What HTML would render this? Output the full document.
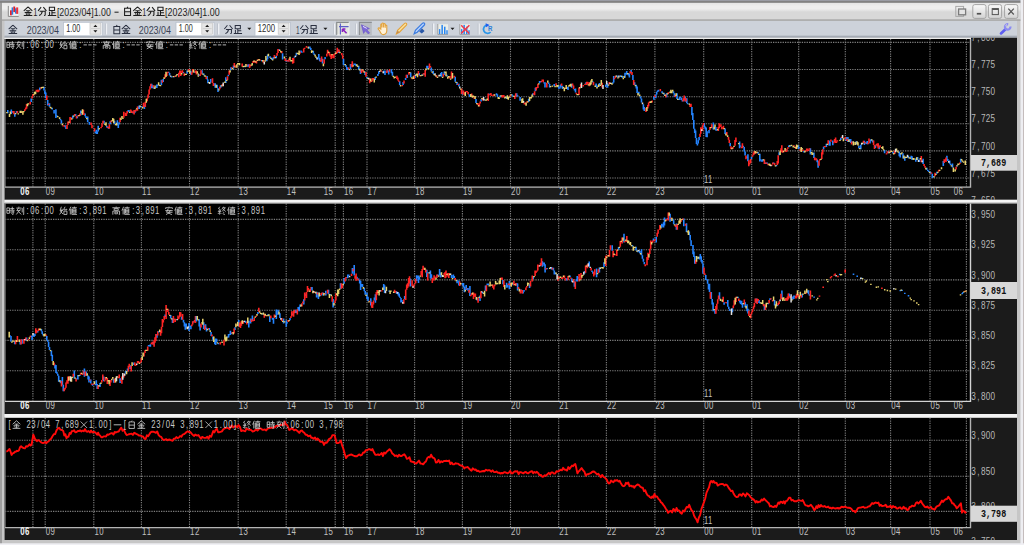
<!DOCTYPE html><html><head><meta charset="utf-8"><title>chart</title><style>html,body{margin:0;padding:0;width:1024px;height:545px;overflow:hidden;background:#c6c6c6}svg{display:block}text{font-family:"Liberation Mono",monospace}</style></head><body>
<svg width="1024" height="545" viewBox="0 0 1024 545">
<defs>
<linearGradient id="tb" x1="0" y1="0" x2="0" y2="1"><stop offset="0" stop-color="#e4e4e4"/><stop offset="0.2" stop-color="#eeeeee"/><stop offset="0.36" stop-color="#eeeeee"/><stop offset="0.55" stop-color="#d8d8d8"/><stop offset="1" stop-color="#d8d8d8"/></linearGradient>
<linearGradient id="btn" x1="0" y1="0" x2="0" y2="1"><stop offset="0" stop-color="#fafafa"/><stop offset="1" stop-color="#d2d2d2"/></linearGradient>
<clipPath id="c1"><rect x="5" y="38" width="965.5" height="149"/></clipPath>
<clipPath id="c2"><rect x="5" y="203.5" width="965.5" height="198"/></clipPath>
<clipPath id="c3"><rect x="5" y="418" width="965.5" height="110"/></clipPath>
<clipPath id="a1"><rect x="971" y="37.8" width="46" height="162"/></clipPath>
<clipPath id="a2"><rect x="971" y="203.5" width="46" height="210.5"/></clipPath>
<clipPath id="a3"><rect x="971" y="418" width="46" height="122"/></clipPath>
</defs>
<rect x="0" y="0" width="1024" height="545" fill="#c6c6c6"/>
<rect x="0" y="0" width="2" height="545" fill="#9e9e9e"/>
<rect x="0" y="0" width="1024" height="1" fill="#9a9ca4"/><rect x="0" y="1" width="1021" height="1.9" fill="#828282"/>
<rect x="1020.5" y="0" width="2.5" height="545" fill="#eeeef2"/>
<rect x="1023" y="0" width="1" height="545" fill="#c4bcbc"/>
<rect x="0" y="543.3" width="1024" height="2" fill="#f0f0f4"/>
<rect x="2" y="2.9" width="1018.5" height="16.5" fill="url(#tb)"/><rect x="2" y="19.4" width="1018.5" height="1.5" fill="#a8a8a8"/>
<rect x="4.5" y="20.9" width="1012.5" height="15" fill="#cdd2da"/>
<rect x="4.5" y="35.7" width="1012.5" height="2.1" fill="#a4aab4"/><rect x="4.5" y="37.8" width="966.5" height="1.2" fill="#ececec"/><rect x="971" y="37.8" width="46" height="1.2" fill="#1b1b1b"/>
<rect x="8.8" y="6.2" width="9.6" height="9.8" fill="#f2f2f2"/>
<path d="M8.3 5.9V16.4H18.7" stroke="#8a8a8a" stroke-width="1" fill="none"/>
<rect x="10" y="10.3" width="1.9" height="5" fill="#e8202a"/><rect x="11.6" y="7.4" width="1.6" height="7.3" fill="#2a7ae0"/><rect x="13.3" y="6.5" width="1.9" height="5.6" fill="#d81e2a"/><rect x="15" y="8.3" width="1.6" height="5.3" fill="#2a7ae0"/><rect x="16.2" y="7.4" width="2" height="6.5" fill="#f0303a"/>
<path transform="translate(23.40 6.60) scale(0.930)" d="M5 0.4L0.4 4.6M5 0.4L9.6 4.6M2.6 4.4H7.4M1.4 6.4H8.6M5 4.4V9.4M2.8 7.2L3.6 8.8M7.2 7.2L6.4 8.8M0.4 9.5H9.6" stroke="#1e1e1e" stroke-width="1.13" fill="none"/>
<text x="33.20" y="16.00" textLength="4.20" lengthAdjust="spacingAndGlyphs" font-size="10.2" font-weight="normal" fill="#1e1e1e" style="font-family:'Liberation Sans',sans-serif" xml:space="preserve">1</text>
<path transform="translate(37.60 6.60) scale(0.930)" d="M3.8 0.5L0.5 4.6M6.2 0.5L9.5 4.6M2.2 5H8.2V8.6Q8.2 9.6 7 9.5M5 5Q4.8 8.2 1.6 9.6" stroke="#1e1e1e" stroke-width="1.13" fill="none"/>
<path transform="translate(47.30 6.60) scale(0.930)" d="M2.2 0.8H7.8V4.2H2.2ZM5 4.2V9.2M5 6.6H8.8M2.4 5.6V9.3M0.6 9.5H9.6" stroke="#1e1e1e" stroke-width="1.13" fill="none"/>
<text x="56.90" y="16.00" textLength="53.90" lengthAdjust="spacingAndGlyphs" font-size="10.2" font-weight="normal" fill="#1e1e1e" style="font-family:'Liberation Sans',sans-serif" xml:space="preserve">[2023/04]1.00</text>
<path d="M114.5 12.2H118.6" stroke="#1e1e1e" stroke-width="1"/>
<path transform="translate(122.90 6.60) scale(0.930)" d="M5.4 0.2L4.4 1.6M1.8 1.8H8.2V9.6H1.8ZM1.8 5.6H8.2" stroke="#1e1e1e" stroke-width="1.13" fill="none"/>
<path transform="translate(132.90 6.60) scale(0.930)" d="M5 0.4L0.4 4.6M5 0.4L9.6 4.6M2.6 4.4H7.4M1.4 6.4H8.6M5 4.4V9.4M2.8 7.2L3.6 8.8M7.2 7.2L6.4 8.8M0.4 9.5H9.6" stroke="#1e1e1e" stroke-width="1.13" fill="none"/>
<text x="142.30" y="16.00" textLength="4.00" lengthAdjust="spacingAndGlyphs" font-size="10.2" font-weight="normal" fill="#1e1e1e" style="font-family:'Liberation Sans',sans-serif" xml:space="preserve">1</text>
<path transform="translate(146.30 6.60) scale(0.930)" d="M3.8 0.5L0.5 4.6M6.2 0.5L9.5 4.6M2.2 5H8.2V8.6Q8.2 9.6 7 9.5M5 5Q4.8 8.2 1.6 9.6" stroke="#1e1e1e" stroke-width="1.13" fill="none"/>
<path transform="translate(155.80 6.60) scale(0.930)" d="M2.2 0.8H7.8V4.2H2.2ZM5 4.2V9.2M5 6.6H8.8M2.4 5.6V9.3M0.6 9.5H9.6" stroke="#1e1e1e" stroke-width="1.13" fill="none"/>
<text x="165.10" y="16.00" textLength="54.50" lengthAdjust="spacingAndGlyphs" font-size="10.2" font-weight="normal" fill="#1e1e1e" style="font-family:'Liberation Sans',sans-serif" xml:space="preserve">[2023/04]1.00</text>
<rect x="955.8" y="6.4" width="7.8" height="10" fill="none" stroke="#a8a8a8" stroke-width="1"/>
<rect x="958.6" y="9" width="7" height="5.8" fill="#e4e4e4" stroke="#7a7a7a" stroke-width="1.3"/>
<rect x="972.8" y="4.6" width="13.2" height="13.8" rx="2" fill="url(#btn)" stroke="#a4a4a4" stroke-width="1"/>
<rect x="988.4" y="4.6" width="13.2" height="13.8" rx="2" fill="url(#btn)" stroke="#a4a4a4" stroke-width="1"/>
<rect x="1004.6" y="4.6" width="13.2" height="13.8" rx="2" fill="url(#btn)" stroke="#a4a4a4" stroke-width="1"/>
<rect x="976.8" y="12.9" width="4.4" height="1.7" fill="#505050"/>
<rect x="992.2" y="8.6" width="6.2" height="6" fill="none" stroke="#555" stroke-width="1"/><rect x="992.2" y="8.4" width="6.2" height="1.6" fill="#555"/>
<path d="M1008.3 8.7L1013.8 14.5M1013.8 8.7L1008.3 14.5" stroke="#555" stroke-width="1.2"/>
<path transform="translate(8.30 24.80) scale(0.920)" d="M5 0.4L0.4 4.6M5 0.4L9.6 4.6M2.6 4.4H7.4M1.4 6.4H8.6M5 4.4V9.4M2.8 7.2L3.6 8.8M7.2 7.2L6.4 8.8M0.4 9.5H9.6" stroke="#2a3040" stroke-width="1.09" fill="none"/>
<text x="26.70" y="34.10" textLength="32.30" lengthAdjust="spacingAndGlyphs" font-size="10.8" font-weight="normal" fill="#3a4254" style="font-family:'Liberation Sans',sans-serif" xml:space="preserve">2023/04</text>
<rect x="63.4" y="22.3" width="38.800000000000004" height="13.5" fill="#ffffff" stroke="#b8c0cc" stroke-width="0.8"/>
<text x="66.20" y="32.00" textLength="14.00" lengthAdjust="spacingAndGlyphs" font-size="10.5" font-weight="normal" fill="#2c2c2c" style="font-family:'Liberation Sans',sans-serif" xml:space="preserve">1.00</text>
<rect x="90.0" y="23" width="10.8" height="11.2" fill="#e6e6e6" stroke="#c4c4c4" stroke-width="0.7"/>
<path d="M91.0 28.6H99.8" stroke="#c8c8c8" stroke-width="0.8"/>
<path d="M93.4 27H97.4L95.4 24.8Z M93.4 30.3H97.4L95.4 32.6Z" fill="#1a1a1a"/>
<rect x="105.7" y="23.5" width="1.4" height="11" fill="#eef0f4"/><rect x="105.1" y="23.5" width="0.6" height="11" fill="#b4bac4"/>
<path transform="translate(112.20 24.80) scale(0.920)" d="M5.4 0.2L4.4 1.6M1.8 1.8H8.2V9.6H1.8ZM1.8 5.6H8.2" stroke="#2a3040" stroke-width="1.09" fill="none"/>
<path transform="translate(121.40 24.80) scale(0.920)" d="M5 0.4L0.4 4.6M5 0.4L9.6 4.6M2.6 4.4H7.4M1.4 6.4H8.6M5 4.4V9.4M2.8 7.2L3.6 8.8M7.2 7.2L6.4 8.8M0.4 9.5H9.6" stroke="#2a3040" stroke-width="1.09" fill="none"/>
<text x="138.70" y="34.10" textLength="32.30" lengthAdjust="spacingAndGlyphs" font-size="10.8" font-weight="normal" fill="#3a4254" style="font-family:'Liberation Sans',sans-serif" xml:space="preserve">2023/04</text>
<rect x="176" y="22.3" width="38" height="13.5" fill="#ffffff" stroke="#b8c0cc" stroke-width="0.8"/>
<text x="178.80" y="32.00" textLength="14.00" lengthAdjust="spacingAndGlyphs" font-size="10.5" font-weight="normal" fill="#2c2c2c" style="font-family:'Liberation Sans',sans-serif" xml:space="preserve">1.00</text>
<rect x="201.8" y="23" width="10.8" height="11.2" fill="#e6e6e6" stroke="#c4c4c4" stroke-width="0.7"/>
<path d="M202.8 28.6H211.60000000000002" stroke="#c8c8c8" stroke-width="0.8"/>
<path d="M205.20000000000002 27H209.20000000000002L207.20000000000002 24.8Z M205.20000000000002 30.3H209.20000000000002L207.20000000000002 32.6Z" fill="#1a1a1a"/>
<rect x="218.0" y="23.5" width="1.4" height="11" fill="#eef0f4"/><rect x="217.4" y="23.5" width="0.6" height="11" fill="#b4bac4"/>
<path transform="translate(223.90 24.80) scale(0.920)" d="M3.8 0.5L0.5 4.6M6.2 0.5L9.5 4.6M2.2 5H8.2V8.6Q8.2 9.6 7 9.5M5 5Q4.8 8.2 1.6 9.6" stroke="#2a3040" stroke-width="1.09" fill="none"/>
<path transform="translate(233.20 24.80) scale(0.920)" d="M2.2 0.8H7.8V4.2H2.2ZM5 4.2V9.2M5 6.6H8.8M2.4 5.6V9.3M0.6 9.5H9.6" stroke="#2a3040" stroke-width="1.09" fill="none"/>
<path d="M247.3 27.8H251.3L249.3 30Z" fill="#1a1a1a"/>
<rect x="255" y="22.3" width="35.39999999999998" height="13.5" fill="#ffffff" stroke="#b8c0cc" stroke-width="0.8"/>
<text x="257.80" y="32.00" textLength="17.20" lengthAdjust="spacingAndGlyphs" font-size="10.5" font-weight="normal" fill="#2c2c2c" style="font-family:'Liberation Sans',sans-serif" xml:space="preserve">1200</text>
<rect x="278.2" y="23" width="10.8" height="11.2" fill="#e6e6e6" stroke="#c4c4c4" stroke-width="0.7"/>
<path d="M279.2 28.6H288.0" stroke="#c8c8c8" stroke-width="0.8"/>
<path d="M281.59999999999997 27H285.59999999999997L283.59999999999997 24.8Z M281.59999999999997 30.3H285.59999999999997L283.59999999999997 32.6Z" fill="#1a1a1a"/>
<text x="296.00" y="34.10" textLength="3.60" lengthAdjust="spacingAndGlyphs" font-size="10.8" font-weight="normal" fill="#3a4254" style="font-family:'Liberation Sans',sans-serif" xml:space="preserve">1</text>
<path transform="translate(299.80 24.80) scale(0.920)" d="M3.8 0.5L0.5 4.6M6.2 0.5L9.5 4.6M2.2 5H8.2V8.6Q8.2 9.6 7 9.5M5 5Q4.8 8.2 1.6 9.6" stroke="#2a3040" stroke-width="1.09" fill="none"/>
<path transform="translate(309.00 24.80) scale(0.920)" d="M2.2 0.8H7.8V4.2H2.2ZM5 4.2V9.2M5 6.6H8.8M2.4 5.6V9.3M0.6 9.5H9.6" stroke="#2a3040" stroke-width="1.09" fill="none"/>
<path d="M323.4 27.8H327.4L325.4 30Z" fill="#1a1a1a"/>
<rect x="333.7" y="23.5" width="1.4" height="11" fill="#eef0f4"/><rect x="333.1" y="23.5" width="0.6" height="11" fill="#b4bac4"/>
<rect x="336.2" y="21.9" width="12.9" height="13.2" fill="#e4e6e0"/><path d="M336.7 35V22.4H349" stroke="#8a8e90" stroke-width="1.2" fill="none"/><path d="M349 22.4V35H336.7" stroke="#f4f6f8" stroke-width="0.8" fill="none"/>
<path d="M340.4 23.5V34.5M339 26.6H348.6" stroke="#5a5ec8" stroke-width="1.1"/><path d="M346.6 33.2L343 29.6M342.4 29V32M342.4 29H345.4" stroke="#8a22c0" stroke-width="1.5" fill="none"/>
<rect x="355.7" y="23.5" width="1.4" height="11" fill="#eef0f4"/><rect x="355.1" y="23.5" width="0.6" height="11" fill="#b4bac4"/>
<rect x="358.9" y="21.9" width="12.9" height="13.2" fill="#b8bcc2"/><path d="M359.4 35V22.4H371.8" stroke="#8c9094" stroke-width="1.1" fill="none"/>
<path d="M361.4 24.8L369.4 28.6L366.6 29.6L369.6 32.8L368.4 34L365.3 30.8L363.6 33.4Z" fill="#7c68d8" stroke="#6a50c8" stroke-width="0.6"/><path d="M363 26.4L366.8 28.4" stroke="#e8e4ff" stroke-width="1"/>
<path d="M379.6 30.6Q377.4 28.8 378.4 28Q379.4 27.6 380.8 29V24.8Q381 23.6 382 24V27.4V23.6Q382.6 22.6 383.6 23.4V27.4V24Q384.4 23.2 385.2 24.2V27.8V25.4Q386 24.8 386.8 25.6V31Q386.4 34.4 383.4 34.6Q381 34.6 379.6 30.6Z" fill="#fff2d8" stroke="#e2a23c" stroke-width="1.1"/>
<path d="M396.4 33.8L397.6 30.4L404.6 23.4Q405.6 22.6 406.4 23.4Q407.2 24.2 406.4 25.2L399.4 32.2Z" fill="#f8e2a0" stroke="#e4a23a" stroke-width="1.1"/><path d="M396.4 33.8L397.6 30.4L399.4 32.2Z" fill="#c08850"/>
<path d="M414.2 33.8L415.4 30.4L422.6 23.2Q423.6 22.4 424.4 23.2Q425.2 24 424.4 25L417.2 32.2Z" fill="#b8d4ff" stroke="#3c7ce0" stroke-width="1.2"/><path d="M419.2 31.4L422 28.6L424.6 31L421.8 33.6Z" fill="#2a58a8"/>
<rect x="433.0" y="23.5" width="1.4" height="11" fill="#eef0f4"/><rect x="432.40000000000003" y="23.5" width="0.6" height="11" fill="#b4bac4"/>
<rect x="437.8" y="24.2" width="10.2" height="10" fill="#eceee8"/><path d="M437.8 24V34.4H448.0" stroke="#9a9a9a" stroke-width="0.9" fill="none"/>
<rect x="438.9" y="29.1" width="1.4" height="5" fill="#2a86f0"/><rect x="441.4" y="24.9" width="1.5" height="9.2" fill="#2a86f0"/><rect x="444.0" y="26.7" width="1.5" height="7.4" fill="#2a86f0"/><rect x="446.3" y="30.2" width="1.4" height="3.9" fill="#2a86f0"/>
<path d="M450.5 27.8H454.5L452.5 30Z" fill="#1a1a1a"/>
<rect x="459.8" y="24.2" width="10.2" height="10" fill="#eceee8"/><path d="M459.8 24V34.4H470.0" stroke="#9a9a9a" stroke-width="0.9" fill="none"/>
<rect x="460.9" y="29.1" width="1.4" height="5" fill="#2a86f0"/><rect x="463.4" y="24.9" width="1.5" height="9.2" fill="#2a86f0"/><rect x="466.0" y="26.7" width="1.5" height="7.4" fill="#2a86f0"/><rect x="468.3" y="30.2" width="1.4" height="3.9" fill="#2a86f0"/>
<path d="M461.2 25.2L469.2 33.4M469.4 25.2L461.2 33.4" stroke="#f03a4a" stroke-width="1.5"/>
<rect x="478.4" y="23.5" width="1.4" height="11" fill="#eef0f4"/><rect x="477.8" y="23.5" width="0.6" height="11" fill="#b4bac4"/>
<path d="M487.6 25.1A4.1 4.1 0 1 0 490.6 32" stroke="#2a96e8" stroke-width="1.7" fill="none"/><path d="M485.6 23.2L489.6 24.9L486 27.2Z" fill="#1a5cf0"/>
<text x="488.00" y="30.90" textLength="4.40" lengthAdjust="spacingAndGlyphs" font-size="8" font-weight="bold" fill="#2a7ed8" style="font-family:'Liberation Sans',sans-serif" xml:space="preserve">R</text>
<path d="M1001 33.4L1005.2 29.4" stroke="#5e5ef2" stroke-width="2.7" stroke-linecap="round"/><path d="M1010.3 26.4A2.7 2.7 0 1 1 1008.2 24.3" stroke="#8c8cf2" stroke-width="2.3" fill="none"/><path d="M1005.6 26.2A2 2 0 0 1 1007 24.6" stroke="#e4e4ff" stroke-width="1"/>
<rect x="4.6" y="39" width="1012.4" height="160.8" fill="#1b1b1b"/>
<rect x="5" y="39" width="965.5" height="147.5" fill="#000"/>
<path d="M5 42.4H970 M5 69.5H970 M5 96.7H970 M5 123.7H970 M5 150.9H970 M5 178.0H970 M32.9 39V186.5 M45.2 39V186.5 M93.8 39V186.5 M141.4 39V186.5 M189.5 39V186.5 M238.2 39V186.5 M286.2 39V186.5 M335.2 39V186.5 M343.4 39V186.5 M367 39V186.5 M414.6 39V186.5 M462.4 39V186.5 M510.5 39V186.5 M558.7 39V186.5 M606.4 39V186.5 M654.9 39V186.5 M703.7 39V186.5 M751.7 39V186.5 M798.7 39V186.5 M845.3 39V186.5 M890.6 39V186.5 M930 39V186.5 M966.4 39V186.5" stroke="#7c7c7c" stroke-width="1.1" stroke-dasharray="1.3 1.1" fill="none"/>
<path d="M5.4 39V187.1" stroke="#686868" stroke-width="0.9" fill="none"/><path d="M5 187.1H970.5V39" stroke="#b4b4b4" stroke-width="1.4" fill="none"/>
<rect x="4.6" y="203" width="1012.4" height="211" fill="#1b1b1b"/>
<rect x="5" y="203.5" width="965.5" height="197.3" fill="#000"/>
<path d="M5 219.4H970 M5 249.7H970 M5 279.9H970 M5 310.2H970 M5 340.4H970 M5 370.7H970 M32.9 203.5V400.8 M45.2 203.5V400.8 M93.8 203.5V400.8 M141.4 203.5V400.8 M189.5 203.5V400.8 M238.2 203.5V400.8 M286.2 203.5V400.8 M335.2 203.5V400.8 M343.4 203.5V400.8 M367 203.5V400.8 M414.6 203.5V400.8 M462.4 203.5V400.8 M510.5 203.5V400.8 M558.7 203.5V400.8 M606.4 203.5V400.8 M654.9 203.5V400.8 M703.7 203.5V400.8 M751.7 203.5V400.8 M798.7 203.5V400.8 M845.3 203.5V400.8 M890.6 203.5V400.8 M930 203.5V400.8 M966.4 203.5V400.8" stroke="#7c7c7c" stroke-width="1.1" stroke-dasharray="1.3 1.1" fill="none"/>
<path d="M5.4 203.5V401.40000000000003" stroke="#686868" stroke-width="0.9" fill="none"/><path d="M5 401.40000000000003H970.5V203.5" stroke="#d4d4d4" stroke-width="1.4" fill="none"/>
<rect x="4.6" y="417.5" width="1012.4" height="122.5" fill="#1b1b1b"/>
<rect x="5" y="418" width="965.5" height="109.0" fill="#000"/>
<path d="M5 440.2H970 M5 476.2H970 M5 511.4H970 M32.9 418V527.0 M45.2 418V527.0 M93.8 418V527.0 M141.4 418V527.0 M189.5 418V527.0 M238.2 418V527.0 M286.2 418V527.0 M335.2 418V527.0 M343.4 418V527.0 M367 418V527.0 M414.6 418V527.0 M462.4 418V527.0 M510.5 418V527.0 M558.7 418V527.0 M606.4 418V527.0 M654.9 418V527.0 M703.7 418V527.0 M751.7 418V527.0 M798.7 418V527.0 M845.3 418V527.0 M890.6 418V527.0 M930 418V527.0 M966.4 418V527.0" stroke="#7c7c7c" stroke-width="1.1" stroke-dasharray="1.3 1.1" fill="none"/>
<path d="M5.4 418V527.6" stroke="#686868" stroke-width="0.9" fill="none"/><path d="M5 527.6H970.5V418" stroke="#b4b4b4" stroke-width="1.4" fill="none"/>
<text transform="scale(0.7 1)" x="28.89 35.74" y="194.80" font-size="11.2" font-weight="bold" fill="#f4f4f4" style="font-family:'Liberation Sans',sans-serif" xml:space="preserve">06</text><text transform="scale(0.7 1)" x="65.46 72.31" y="194.80" font-size="11.2" font-weight="normal" fill="#c0c0c0" style="font-family:'Liberation Sans',sans-serif" xml:space="preserve">09</text><text transform="scale(0.7 1)" x="134.89 141.74" y="194.80" font-size="11.2" font-weight="normal" fill="#c0c0c0" style="font-family:'Liberation Sans',sans-serif" xml:space="preserve">10</text><text transform="scale(0.7 1)" x="202.89 209.74" y="194.80" font-size="11.2" font-weight="normal" fill="#c0c0c0" style="font-family:'Liberation Sans',sans-serif" xml:space="preserve">11</text><text transform="scale(0.7 1)" x="271.60 278.46" y="194.80" font-size="11.2" font-weight="normal" fill="#c0c0c0" style="font-family:'Liberation Sans',sans-serif" xml:space="preserve">12</text><text transform="scale(0.7 1)" x="341.17 348.03" y="194.80" font-size="11.2" font-weight="normal" fill="#c0c0c0" style="font-family:'Liberation Sans',sans-serif" xml:space="preserve">13</text><text transform="scale(0.7 1)" x="409.74 416.60" y="194.80" font-size="11.2" font-weight="normal" fill="#c0c0c0" style="font-family:'Liberation Sans',sans-serif" xml:space="preserve">14</text><text transform="scale(0.7 1)" x="462.46 469.31" y="194.80" font-size="11.2" font-weight="normal" fill="#c0c0c0" style="font-family:'Liberation Sans',sans-serif" xml:space="preserve">15</text><text transform="scale(0.7 1)" x="491.46 498.31" y="194.80" font-size="11.2" font-weight="normal" fill="#c0c0c0" style="font-family:'Liberation Sans',sans-serif" xml:space="preserve">16</text><text transform="scale(0.7 1)" x="525.17 532.03" y="194.80" font-size="11.2" font-weight="normal" fill="#c0c0c0" style="font-family:'Liberation Sans',sans-serif" xml:space="preserve">17</text><text transform="scale(0.7 1)" x="593.17 600.03" y="194.80" font-size="11.2" font-weight="normal" fill="#c0c0c0" style="font-family:'Liberation Sans',sans-serif" xml:space="preserve">18</text><text transform="scale(0.7 1)" x="661.46 668.31" y="194.80" font-size="11.2" font-weight="normal" fill="#c0c0c0" style="font-family:'Liberation Sans',sans-serif" xml:space="preserve">19</text><text transform="scale(0.7 1)" x="730.17 737.03" y="194.80" font-size="11.2" font-weight="normal" fill="#c0c0c0" style="font-family:'Liberation Sans',sans-serif" xml:space="preserve">20</text><text transform="scale(0.7 1)" x="799.03 805.89" y="194.80" font-size="11.2" font-weight="normal" fill="#c0c0c0" style="font-family:'Liberation Sans',sans-serif" xml:space="preserve">21</text><text transform="scale(0.7 1)" x="867.17 874.03" y="194.80" font-size="11.2" font-weight="normal" fill="#c0c0c0" style="font-family:'Liberation Sans',sans-serif" xml:space="preserve">22</text><text transform="scale(0.7 1)" x="936.46 943.31" y="194.80" font-size="11.2" font-weight="normal" fill="#c0c0c0" style="font-family:'Liberation Sans',sans-serif" xml:space="preserve">23</text><text transform="scale(0.7 1)" x="1006.17 1013.03" y="194.80" font-size="11.2" font-weight="normal" fill="#c0c0c0" style="font-family:'Liberation Sans',sans-serif" xml:space="preserve">00</text><text transform="scale(0.7 1)" x="1074.74 1081.60" y="194.80" font-size="11.2" font-weight="normal" fill="#c0c0c0" style="font-family:'Liberation Sans',sans-serif" xml:space="preserve">01</text><text transform="scale(0.7 1)" x="1141.89 1148.74" y="194.80" font-size="11.2" font-weight="normal" fill="#c0c0c0" style="font-family:'Liberation Sans',sans-serif" xml:space="preserve">02</text><text transform="scale(0.7 1)" x="1208.46 1215.31" y="194.80" font-size="11.2" font-weight="normal" fill="#c0c0c0" style="font-family:'Liberation Sans',sans-serif" xml:space="preserve">03</text><text transform="scale(0.7 1)" x="1273.17 1280.03" y="194.80" font-size="11.2" font-weight="normal" fill="#c0c0c0" style="font-family:'Liberation Sans',sans-serif" xml:space="preserve">04</text><text transform="scale(0.7 1)" x="1329.46 1336.31" y="194.80" font-size="11.2" font-weight="normal" fill="#c0c0c0" style="font-family:'Liberation Sans',sans-serif" xml:space="preserve">05</text><text transform="scale(0.7 1)" x="1362.46 1369.31" y="194.80" font-size="11.2" font-weight="normal" fill="#c0c0c0" style="font-family:'Liberation Sans',sans-serif" xml:space="preserve">06</text>
<text transform="scale(0.7 1)" x="28.89 35.74" y="409.30" font-size="11.2" font-weight="bold" fill="#f4f4f4" style="font-family:'Liberation Sans',sans-serif" xml:space="preserve">06</text><text transform="scale(0.7 1)" x="65.46 72.31" y="409.30" font-size="11.2" font-weight="normal" fill="#c0c0c0" style="font-family:'Liberation Sans',sans-serif" xml:space="preserve">09</text><text transform="scale(0.7 1)" x="134.89 141.74" y="409.30" font-size="11.2" font-weight="normal" fill="#c0c0c0" style="font-family:'Liberation Sans',sans-serif" xml:space="preserve">10</text><text transform="scale(0.7 1)" x="202.89 209.74" y="409.30" font-size="11.2" font-weight="normal" fill="#c0c0c0" style="font-family:'Liberation Sans',sans-serif" xml:space="preserve">11</text><text transform="scale(0.7 1)" x="271.60 278.46" y="409.30" font-size="11.2" font-weight="normal" fill="#c0c0c0" style="font-family:'Liberation Sans',sans-serif" xml:space="preserve">12</text><text transform="scale(0.7 1)" x="341.17 348.03" y="409.30" font-size="11.2" font-weight="normal" fill="#c0c0c0" style="font-family:'Liberation Sans',sans-serif" xml:space="preserve">13</text><text transform="scale(0.7 1)" x="409.74 416.60" y="409.30" font-size="11.2" font-weight="normal" fill="#c0c0c0" style="font-family:'Liberation Sans',sans-serif" xml:space="preserve">14</text><text transform="scale(0.7 1)" x="462.46 469.31" y="409.30" font-size="11.2" font-weight="normal" fill="#c0c0c0" style="font-family:'Liberation Sans',sans-serif" xml:space="preserve">15</text><text transform="scale(0.7 1)" x="491.46 498.31" y="409.30" font-size="11.2" font-weight="normal" fill="#c0c0c0" style="font-family:'Liberation Sans',sans-serif" xml:space="preserve">16</text><text transform="scale(0.7 1)" x="525.17 532.03" y="409.30" font-size="11.2" font-weight="normal" fill="#c0c0c0" style="font-family:'Liberation Sans',sans-serif" xml:space="preserve">17</text><text transform="scale(0.7 1)" x="593.17 600.03" y="409.30" font-size="11.2" font-weight="normal" fill="#c0c0c0" style="font-family:'Liberation Sans',sans-serif" xml:space="preserve">18</text><text transform="scale(0.7 1)" x="661.46 668.31" y="409.30" font-size="11.2" font-weight="normal" fill="#c0c0c0" style="font-family:'Liberation Sans',sans-serif" xml:space="preserve">19</text><text transform="scale(0.7 1)" x="730.17 737.03" y="409.30" font-size="11.2" font-weight="normal" fill="#c0c0c0" style="font-family:'Liberation Sans',sans-serif" xml:space="preserve">20</text><text transform="scale(0.7 1)" x="799.03 805.89" y="409.30" font-size="11.2" font-weight="normal" fill="#c0c0c0" style="font-family:'Liberation Sans',sans-serif" xml:space="preserve">21</text><text transform="scale(0.7 1)" x="867.17 874.03" y="409.30" font-size="11.2" font-weight="normal" fill="#c0c0c0" style="font-family:'Liberation Sans',sans-serif" xml:space="preserve">22</text><text transform="scale(0.7 1)" x="936.46 943.31" y="409.30" font-size="11.2" font-weight="normal" fill="#c0c0c0" style="font-family:'Liberation Sans',sans-serif" xml:space="preserve">23</text><text transform="scale(0.7 1)" x="1006.17 1013.03" y="409.30" font-size="11.2" font-weight="normal" fill="#c0c0c0" style="font-family:'Liberation Sans',sans-serif" xml:space="preserve">00</text><text transform="scale(0.7 1)" x="1074.74 1081.60" y="409.30" font-size="11.2" font-weight="normal" fill="#c0c0c0" style="font-family:'Liberation Sans',sans-serif" xml:space="preserve">01</text><text transform="scale(0.7 1)" x="1141.89 1148.74" y="409.30" font-size="11.2" font-weight="normal" fill="#c0c0c0" style="font-family:'Liberation Sans',sans-serif" xml:space="preserve">02</text><text transform="scale(0.7 1)" x="1208.46 1215.31" y="409.30" font-size="11.2" font-weight="normal" fill="#c0c0c0" style="font-family:'Liberation Sans',sans-serif" xml:space="preserve">03</text><text transform="scale(0.7 1)" x="1273.17 1280.03" y="409.30" font-size="11.2" font-weight="normal" fill="#c0c0c0" style="font-family:'Liberation Sans',sans-serif" xml:space="preserve">04</text><text transform="scale(0.7 1)" x="1329.46 1336.31" y="409.30" font-size="11.2" font-weight="normal" fill="#c0c0c0" style="font-family:'Liberation Sans',sans-serif" xml:space="preserve">05</text><text transform="scale(0.7 1)" x="1362.46 1369.31" y="409.30" font-size="11.2" font-weight="normal" fill="#c0c0c0" style="font-family:'Liberation Sans',sans-serif" xml:space="preserve">06</text>
<text transform="scale(0.7 1)" x="28.89 35.74" y="535.30" font-size="11.2" font-weight="bold" fill="#f4f4f4" style="font-family:'Liberation Sans',sans-serif" xml:space="preserve">06</text><text transform="scale(0.7 1)" x="65.46 72.31" y="535.30" font-size="11.2" font-weight="normal" fill="#c0c0c0" style="font-family:'Liberation Sans',sans-serif" xml:space="preserve">09</text><text transform="scale(0.7 1)" x="134.89 141.74" y="535.30" font-size="11.2" font-weight="normal" fill="#c0c0c0" style="font-family:'Liberation Sans',sans-serif" xml:space="preserve">10</text><text transform="scale(0.7 1)" x="202.89 209.74" y="535.30" font-size="11.2" font-weight="normal" fill="#c0c0c0" style="font-family:'Liberation Sans',sans-serif" xml:space="preserve">11</text><text transform="scale(0.7 1)" x="271.60 278.46" y="535.30" font-size="11.2" font-weight="normal" fill="#c0c0c0" style="font-family:'Liberation Sans',sans-serif" xml:space="preserve">12</text><text transform="scale(0.7 1)" x="341.17 348.03" y="535.30" font-size="11.2" font-weight="normal" fill="#c0c0c0" style="font-family:'Liberation Sans',sans-serif" xml:space="preserve">13</text><text transform="scale(0.7 1)" x="409.74 416.60" y="535.30" font-size="11.2" font-weight="normal" fill="#c0c0c0" style="font-family:'Liberation Sans',sans-serif" xml:space="preserve">14</text><text transform="scale(0.7 1)" x="462.46 469.31" y="535.30" font-size="11.2" font-weight="normal" fill="#c0c0c0" style="font-family:'Liberation Sans',sans-serif" xml:space="preserve">15</text><text transform="scale(0.7 1)" x="491.46 498.31" y="535.30" font-size="11.2" font-weight="normal" fill="#c0c0c0" style="font-family:'Liberation Sans',sans-serif" xml:space="preserve">16</text><text transform="scale(0.7 1)" x="525.17 532.03" y="535.30" font-size="11.2" font-weight="normal" fill="#c0c0c0" style="font-family:'Liberation Sans',sans-serif" xml:space="preserve">17</text><text transform="scale(0.7 1)" x="593.17 600.03" y="535.30" font-size="11.2" font-weight="normal" fill="#c0c0c0" style="font-family:'Liberation Sans',sans-serif" xml:space="preserve">18</text><text transform="scale(0.7 1)" x="661.46 668.31" y="535.30" font-size="11.2" font-weight="normal" fill="#c0c0c0" style="font-family:'Liberation Sans',sans-serif" xml:space="preserve">19</text><text transform="scale(0.7 1)" x="730.17 737.03" y="535.30" font-size="11.2" font-weight="normal" fill="#c0c0c0" style="font-family:'Liberation Sans',sans-serif" xml:space="preserve">20</text><text transform="scale(0.7 1)" x="799.03 805.89" y="535.30" font-size="11.2" font-weight="normal" fill="#c0c0c0" style="font-family:'Liberation Sans',sans-serif" xml:space="preserve">21</text><text transform="scale(0.7 1)" x="867.17 874.03" y="535.30" font-size="11.2" font-weight="normal" fill="#c0c0c0" style="font-family:'Liberation Sans',sans-serif" xml:space="preserve">22</text><text transform="scale(0.7 1)" x="936.46 943.31" y="535.30" font-size="11.2" font-weight="normal" fill="#c0c0c0" style="font-family:'Liberation Sans',sans-serif" xml:space="preserve">23</text><text transform="scale(0.7 1)" x="1006.17 1013.03" y="535.30" font-size="11.2" font-weight="normal" fill="#c0c0c0" style="font-family:'Liberation Sans',sans-serif" xml:space="preserve">00</text><text transform="scale(0.7 1)" x="1074.74 1081.60" y="535.30" font-size="11.2" font-weight="normal" fill="#c0c0c0" style="font-family:'Liberation Sans',sans-serif" xml:space="preserve">01</text><text transform="scale(0.7 1)" x="1141.89 1148.74" y="535.30" font-size="11.2" font-weight="normal" fill="#c0c0c0" style="font-family:'Liberation Sans',sans-serif" xml:space="preserve">02</text><text transform="scale(0.7 1)" x="1208.46 1215.31" y="535.30" font-size="11.2" font-weight="normal" fill="#c0c0c0" style="font-family:'Liberation Sans',sans-serif" xml:space="preserve">03</text><text transform="scale(0.7 1)" x="1273.17 1280.03" y="535.30" font-size="11.2" font-weight="normal" fill="#c0c0c0" style="font-family:'Liberation Sans',sans-serif" xml:space="preserve">04</text><text transform="scale(0.7 1)" x="1329.46 1336.31" y="535.30" font-size="11.2" font-weight="normal" fill="#c0c0c0" style="font-family:'Liberation Sans',sans-serif" xml:space="preserve">05</text><text transform="scale(0.7 1)" x="1362.46 1369.31" y="535.30" font-size="11.2" font-weight="normal" fill="#c0c0c0" style="font-family:'Liberation Sans',sans-serif" xml:space="preserve">06</text>
<g clip-path="url(#a1)"><text transform="scale(0.7 1)" x="1387.60 1396.09 1401.32 1408.18 1415.03" y="41.10" font-size="11.7" font-weight="normal" fill="#b8b8b8" style="font-family:'Liberation Sans',sans-serif" xml:space="preserve">7,800</text><text transform="scale(0.7 1)" x="1387.60 1396.09 1401.32 1408.18 1415.03" y="68.20" font-size="11.7" font-weight="normal" fill="#b8b8b8" style="font-family:'Liberation Sans',sans-serif" xml:space="preserve">7,775</text><text transform="scale(0.7 1)" x="1387.60 1396.09 1401.32 1408.18 1415.03" y="95.40" font-size="11.7" font-weight="normal" fill="#b8b8b8" style="font-family:'Liberation Sans',sans-serif" xml:space="preserve">7,750</text><text transform="scale(0.7 1)" x="1387.60 1396.09 1401.32 1408.18 1415.03" y="122.40" font-size="11.7" font-weight="normal" fill="#b8b8b8" style="font-family:'Liberation Sans',sans-serif" xml:space="preserve">7,725</text><text transform="scale(0.7 1)" x="1387.60 1396.09 1401.32 1408.18 1415.03" y="149.60" font-size="11.7" font-weight="normal" fill="#b8b8b8" style="font-family:'Liberation Sans',sans-serif" xml:space="preserve">7,700</text><text transform="scale(0.7 1)" x="1387.60 1396.09 1401.32 1408.18 1415.03" y="176.70" font-size="11.7" font-weight="normal" fill="#b8b8b8" style="font-family:'Liberation Sans',sans-serif" xml:space="preserve">7,675</text><text transform="scale(0.7 1)" x="1387.60 1396.09 1401.32 1408.18 1415.03" y="203.80" font-size="11.7" font-weight="normal" fill="#b8b8b8" style="font-family:'Liberation Sans',sans-serif" xml:space="preserve">7,650</text></g>
<g clip-path="url(#a2)"><text transform="scale(0.7 1)" x="1387.60 1396.09 1401.32 1408.18 1415.03" y="218.10" font-size="11.7" font-weight="normal" fill="#b8b8b8" style="font-family:'Liberation Sans',sans-serif" xml:space="preserve">3,950</text><text transform="scale(0.7 1)" x="1387.60 1396.09 1401.32 1408.18 1415.03" y="248.40" font-size="11.7" font-weight="normal" fill="#b8b8b8" style="font-family:'Liberation Sans',sans-serif" xml:space="preserve">3,925</text><text transform="scale(0.7 1)" x="1387.60 1396.09 1401.32 1408.18 1415.03" y="278.60" font-size="11.7" font-weight="normal" fill="#b8b8b8" style="font-family:'Liberation Sans',sans-serif" xml:space="preserve">3,900</text><text transform="scale(0.7 1)" x="1387.60 1396.09 1401.32 1408.18 1415.03" y="308.90" font-size="11.7" font-weight="normal" fill="#b8b8b8" style="font-family:'Liberation Sans',sans-serif" xml:space="preserve">3,875</text><text transform="scale(0.7 1)" x="1387.60 1396.09 1401.32 1408.18 1415.03" y="339.10" font-size="11.7" font-weight="normal" fill="#b8b8b8" style="font-family:'Liberation Sans',sans-serif" xml:space="preserve">3,850</text><text transform="scale(0.7 1)" x="1387.60 1396.09 1401.32 1408.18 1415.03" y="369.40" font-size="11.7" font-weight="normal" fill="#b8b8b8" style="font-family:'Liberation Sans',sans-serif" xml:space="preserve">3,825</text><text transform="scale(0.7 1)" x="1387.60 1396.09 1401.32 1408.18 1415.03" y="399.60" font-size="11.7" font-weight="normal" fill="#b8b8b8" style="font-family:'Liberation Sans',sans-serif" xml:space="preserve">3,800</text></g>
<g clip-path="url(#a3)"><text transform="scale(0.7 1)" x="1387.60 1396.09 1401.32 1408.18 1415.03" y="438.90" font-size="11.7" font-weight="normal" fill="#b8b8b8" style="font-family:'Liberation Sans',sans-serif" xml:space="preserve">3,900</text><text transform="scale(0.7 1)" x="1387.60 1396.09 1401.32 1408.18 1415.03" y="474.90" font-size="11.7" font-weight="normal" fill="#b8b8b8" style="font-family:'Liberation Sans',sans-serif" xml:space="preserve">3,850</text><text transform="scale(0.7 1)" x="1387.60 1396.09 1401.32 1408.18 1415.03" y="510.10" font-size="11.7" font-weight="normal" fill="#b8b8b8" style="font-family:'Liberation Sans',sans-serif" xml:space="preserve">3,800</text><text transform="scale(0.7 1)" x="1387.60 1396.09 1401.32 1408.18 1415.03" y="545.30" font-size="11.7" font-weight="normal" fill="#b8b8b8" style="font-family:'Liberation Sans',sans-serif" xml:space="preserve">3,750</text></g>
<g clip-path="url(#c1)"><path d="M7.8 110.0v3.2M11.3 109.5v4.6M12.1 110.9v1.8M14.8 112.9v3.9M16.5 111.1v2.0M31.2 98.6v3.3M39.8 87.4v2.9M44.0 86.7v3.9" stroke="#2484ff" stroke-width="1.6" fill="none"/><path d="M13.0 111.0v1.6M13.9 111.0v3.3M17.4 111.1v2.2M22.0 111.7v1.3M24.8 109.3v1.6M25.7 107.6v1.8M26.6 103.9v4.8M30.2 101.8v2.6M32.1 96.3v2.2M33.0 94.0v2.3M36.4 89.7v1.8M37.3 89.7v2.6M38.1 89.4v2.9M39.0 90.3v1.3M40.7 87.4v1.3" stroke="#ff2424" stroke-width="1.6" fill="none"/><path d="M6.9 111.9v1.3M9.5 114.1v3.0M10.4 111.5v2.7M15.6 112.9v1.4M18.3 113.3v1.3M20.2 110.7v2.4M21.1 110.8v2.2M22.9 111.0v3.7M23.8 110.9v1.3M27.5 103.5v2.8M28.4 103.3v1.3M33.9 93.7v1.5M34.7 91.8v1.9M35.6 91.5v2.8M41.5 87.1v1.5M42.4 86.8v1.3M43.2 86.7v1.3" stroke="#e8d470" stroke-width="1.5" fill="none"/><path d="M44.9 90.6v3.5M45.8 92.6v5.7M47.7 100.1v5.4M49.5 103.2v3.6M52.2 107.7v1.9M54.1 110.0v3.6M55.9 109.2v8.7M56.8 115.3v1.3M60.5 119.0v1.3M61.4 120.3v3.2M65.1 125.3v2.0M66.0 127.3v1.7M72.8 115.5v2.9M75.6 114.1v2.0M77.3 116.2v2.1M80.8 110.6v4.7" stroke="#2484ff" stroke-width="1.6" fill="none"/><path d="M46.8 95.5v4.6M48.6 103.8v1.3M63.2 125.2v1.3M64.2 125.3v1.3M67.0 124.9v4.2M68.0 121.4v3.5M70.0 117.1v6.2M70.9 117.2v2.5M74.7 114.1v1.6M76.5 116.1v2.3M78.2 115.0v1.3M79.9 113.5v2.5M83.4 109.7v4.7" stroke="#ff2424" stroke-width="1.6" fill="none"/><path d="M50.4 106.8v1.3M51.3 107.5v1.3M57.8 116.0v1.3M59.6 117.2v1.8M62.3 123.5v1.7M69.0 121.4v1.3M71.9 118.3v1.3M73.7 115.5v1.3M79.0 115.0v1.3M81.6 111.5v1.3M82.5 109.3v5.4" stroke="#e8d470" stroke-width="1.5" fill="none"/><path d="M85.1 113.6v2.7M86.0 116.3v1.6M87.7 116.5v5.7M89.4 121.9v2.9M95.4 131.6v1.3M96.3 129.7v4.2M97.3 131.5v2.4M98.2 125.8v5.7M104.0 120.8v2.8M106.8 125.7v1.7M108.5 126.7v2.0M110.2 121.2v3.0M114.6 120.7v3.4M117.4 120.3v4.9M118.3 124.4v3.5M119.2 122.2v2.2" stroke="#2484ff" stroke-width="1.6" fill="none"/><path d="M84.2 113.6v1.3M91.1 122.6v2.4M92.0 125.0v3.2M94.6 128.2v3.4M101.1 126.9v1.3M102.0 123.3v3.6M103.0 120.8v2.5M107.7 126.7v1.3M109.4 124.2v4.5M111.1 120.5v2.0M120.1 117.8v4.4M123.8 111.7v6.0" stroke="#ff2424" stroke-width="1.6" fill="none"/><path d="M86.8 117.9v1.3M99.2 128.1v1.3M105.0 123.6v1.3M106.0 122.3v3.5M112.0 120.2v1.3M112.8 118.1v3.0M113.7 118.8v4.1M115.5 124.0v1.3M116.5 122.7v2.7M121.0 117.8v2.3M122.0 116.1v1.8M122.9 117.7v1.3" stroke="#e8d470" stroke-width="1.5" fill="none"/><path d="M128.1 110.2v2.0M129.0 110.1v1.5M133.2 111.6v1.8M134.9 110.2v2.6M138.4 106.6v2.3M139.2 105.6v3.3M140.9 106.0v1.3M141.8 106.0v1.3M144.4 104.8v4.2M151.7 83.8v4.5M152.6 85.2v3.0M156.8 84.6v3.3M157.7 84.6v1.3" stroke="#2484ff" stroke-width="1.6" fill="none"/><path d="M125.5 112.8v3.1M126.4 113.6v2.3M127.2 110.9v2.7M130.7 109.4v2.2M131.5 110.5v2.4M132.4 111.6v1.3M134.1 110.0v4.4M135.8 109.5v2.1M137.5 106.6v4.1M143.5 102.8v4.5M145.3 101.7v5.2M147.2 98.3v3.0M148.1 94.4v3.9M149.1 89.5v4.9M150.0 86.3v3.3M150.8 83.8v2.5M153.4 85.2v2.2" stroke="#ff2424" stroke-width="1.6" fill="none"/><path d="M129.8 111.6v1.3M136.7 108.3v1.3M140.1 105.6v1.6M142.7 107.1v1.3M146.3 98.8v3.9M155.1 85.6v3.1M158.6 82.3v2.9M159.6 84.8v1.3M160.5 84.9v1.3" stroke="#e8d470" stroke-width="1.5" fill="none"/><path d="M154.2 87.4v1.3" stroke="#e0e0e0" stroke-width="1.5" fill="none"/><path d="M161.4 79.8v5.1M163.2 79.0v3.1M168.7 71.8v1.3M169.6 73.0v2.4M171.5 76.2v1.3M174.2 76.0v1.3M177.9 74.0v1.3M183.4 71.9v1.3M187.1 70.6v3.2M190.8 70.7v4.0M194.6 71.4v1.4" stroke="#2484ff" stroke-width="1.6" fill="none"/><path d="M162.3 80.3v2.4M165.1 74.2v4.1M166.9 72.5v3.5M167.8 71.8v1.3M175.1 75.7v1.3M178.8 72.8v4.5M179.8 70.5v3.5M180.7 70.5v5.5M182.5 70.2v2.9M184.3 73.2v2.7M188.9 68.9v2.8M191.7 72.3v2.4M192.7 69.0v3.4M195.5 70.6v2.3M196.4 70.6v3.8" stroke="#ff2424" stroke-width="1.6" fill="none"/><path d="M164.1 77.2v1.9M166.0 71.7v5.4M173.3 76.0v1.3M176.1 75.2v1.3M177.0 74.0v1.3M181.6 73.1v1.3M185.2 73.8v1.3M186.2 73.8v1.3M188.0 70.6v1.3M189.8 70.2v3.4M193.6 69.4v3.0M197.3 71.2v2.4M198.3 73.6v3.1" stroke="#e8d470" stroke-width="1.5" fill="none"/><path d="M170.6 75.4v1.3" stroke="#e0e0e0" stroke-width="1.5" fill="none"/><path d="M199.2 74.4v1.5M202.0 70.3v3.4M203.8 73.5v1.7M207.1 76.1v3.5M207.9 79.6v3.7M210.7 79.1v3.5M214.3 83.3v2.5M215.2 83.3v4.5M217.1 84.7v3.3M218.0 88.0v4.1M220.6 85.2v2.8M225.8 77.3v5.6M228.3 74.7v1.6M230.9 67.2v3.1M233.5 65.5v3.1" stroke="#2484ff" stroke-width="1.6" fill="none"/><path d="M200.1 74.6v1.3M201.0 70.3v4.2M206.3 76.8v2.2M212.5 78.2v4.8M213.4 83.0v2.9M219.8 86.7v2.5M222.4 84.1v2.1M227.5 76.3v3.6M229.2 70.4v4.3M231.8 67.2v1.3M234.3 63.0v4.3" stroke="#ff2424" stroke-width="1.6" fill="none"/><path d="M202.9 73.5v1.3M204.6 75.2v1.3M205.4 75.4v1.4M208.8 82.0v1.3M216.2 84.7v3.1M218.9 89.3v1.3M221.5 85.2v1.3M224.9 81.5v1.4M226.7 79.8v1.3M230.1 70.2v2.3M232.6 68.1v1.3M235.2 65.8v1.6" stroke="#e8d470" stroke-width="1.5" fill="none"/><path d="M209.7 82.0v1.9M223.2 82.4v3.8" stroke="#e0e0e0" stroke-width="1.5" fill="none"/><path d="M245.0 65.8v1.4M247.8 64.4v2.4M248.7 64.3v2.5M261.7 60.0v1.3M266.8 58.3v3.0M267.6 54.5v4.7M270.1 56.3v1.8M271.9 57.8v2.2M273.6 56.9v2.4" stroke="#2484ff" stroke-width="1.6" fill="none"/><path d="M236.1 65.2v2.3M242.2 63.5v3.2M246.8 64.4v1.3M249.6 64.3v3.6M250.5 64.8v1.8M253.1 61.0v2.0M254.8 60.6v2.2M256.5 61.1v2.3M258.3 59.1v1.3M260.0 59.5v1.3M263.4 60.1v2.7" stroke="#ff2424" stroke-width="1.6" fill="none"/><path d="M236.9 64.3v3.5M237.8 63.1v1.3M238.6 63.1v1.3M239.5 63.1v2.1M243.2 65.9v1.3M244.1 65.8v1.3M245.9 64.0v3.1M251.4 64.4v1.3M252.2 62.9v2.7M253.9 60.6v1.3M255.7 61.3v1.3M257.4 59.7v1.4M259.1 59.1v1.3M262.6 60.1v1.3M265.1 60.3v1.5M265.9 56.1v4.2M268.4 53.8v2.4M271.0 57.8v1.3M272.7 59.3v1.3" stroke="#e8d470" stroke-width="1.5" fill="none"/><path d="M264.3 61.8v2.6" stroke="#e0e0e0" stroke-width="1.5" fill="none"/><path d="M276.2 55.7v2.5M278.9 49.1v1.3M282.6 53.3v6.3M286.3 59.7v1.7M288.1 59.9v1.7M294.6 56.4v1.4M296.4 52.8v2.8M301.0 50.5v1.8M301.9 51.4v1.3M309.1 46.4v2.3M309.9 46.4v1.5M310.8 47.9v2.2M313.3 50.8v2.8" stroke="#2484ff" stroke-width="1.6" fill="none"/><path d="M274.4 55.0v3.2M277.1 53.1v2.6M278.0 49.1v4.0M281.7 51.1v2.1M285.3 58.3v2.7M287.2 59.9v1.5M289.0 58.5v3.2M292.7 58.0v5.7M293.6 57.8v5.1M300.1 51.7v1.9M303.7 48.4v4.1M304.6 47.7v1.3M306.5 46.0v1.8" stroke="#ff2424" stroke-width="1.6" fill="none"/><path d="M275.3 56.9v1.3M279.8 49.7v1.4M280.8 51.1v1.3M284.4 56.5v1.9M290.0 56.8v3.3M290.9 60.1v1.3M291.8 60.1v1.3M297.3 52.8v1.3M298.2 53.0v1.3M299.1 50.5v4.6M308.3 46.7v1.9M311.6 50.2v2.8M312.4 50.8v1.3" stroke="#e8d470" stroke-width="1.5" fill="none"/><path d="M295.5 55.6v1.3" stroke="#e0e0e0" stroke-width="1.5" fill="none"/><path d="M314.2 53.6v1.3M317.9 57.0v2.5M318.8 54.1v4.0M319.7 58.1v3.1M322.5 58.8v4.7M325.1 57.1v2.1M338.2 49.6v3.3M343.5 58.7v6.2M344.3 64.0v1.3M346.0 65.0v2.0M346.8 67.0v2.9M347.7 67.6v2.3M350.5 63.9v5.0" stroke="#2484ff" stroke-width="1.6" fill="none"/><path d="M320.6 59.8v2.0M321.6 56.6v5.2M324.2 59.2v4.5M326.8 53.8v2.8M327.6 49.7v4.1M329.4 52.0v3.4M330.3 55.4v1.3M331.2 54.0v4.9M333.0 55.0v3.2M333.9 54.1v4.1M334.7 53.5v1.3M336.4 51.7v2.3M337.3 47.7v5.2M339.0 49.6v2.5M341.8 52.9v2.4M342.7 55.3v3.4M348.6 67.6v1.6" stroke="#ff2424" stroke-width="1.6" fill="none"/><path d="M315.1 54.4v2.0M316.1 56.4v1.7M323.4 63.5v2.8M328.5 51.6v1.3M332.1 54.0v1.3M335.6 52.6v1.4M339.9 51.8v1.4M345.2 64.0v1.3M349.6 68.9v1.3" stroke="#e8d470" stroke-width="1.5" fill="none"/><path d="M317.0 58.1v1.4" stroke="#e0e0e0" stroke-width="1.5" fill="none"/><path d="M354.1 63.6v1.6M355.1 63.6v1.3M356.0 64.2v2.1M358.7 65.8v4.0M360.5 68.7v5.4M365.1 71.6v3.5M366.9 76.8v1.4M375.2 76.9v3.0M377.9 74.0v2.1M378.8 71.3v2.7M384.1 70.6v2.6M385.0 70.6v4.4M387.8 70.3v1.7M388.7 70.4v4.2" stroke="#2484ff" stroke-width="1.6" fill="none"/><path d="M351.4 64.0v2.7M352.3 61.2v6.1M361.4 69.2v3.8M363.3 70.0v2.2M366.0 72.1v4.7M369.7 78.5v4.7M371.6 80.6v1.3M372.5 78.1v2.6M373.4 78.1v1.3M381.4 70.4v1.3M386.9 70.3v2.8M389.6 69.3v2.5" stroke="#ff2424" stroke-width="1.6" fill="none"/><path d="M353.2 65.2v1.3M356.9 64.2v2.0M357.8 65.8v1.3M359.6 68.7v1.8M362.4 69.2v1.3M364.2 71.2v1.6M367.9 77.7v1.3M370.7 78.4v3.1M374.3 78.7v3.8M376.1 76.5v1.3M380.6 69.4v1.4" stroke="#e8d470" stroke-width="1.5" fill="none"/><path d="M368.8 77.7v1.9M379.7 70.8v1.3M383.2 71.2v2.0" stroke="#e0e0e0" stroke-width="1.5" fill="none"/><path d="M391.4 69.2v4.1M392.4 71.8v4.0M399.7 81.3v3.7M403.1 82.1v2.9M405.6 77.9v2.2M407.3 74.7v3.2M410.7 72.4v4.9M415.0 74.6v3.5M419.2 73.1v2.5M421.8 74.5v1.3M424.3 73.2v1.6M426.9 65.8v2.4M427.8 65.8v3.2" stroke="#2484ff" stroke-width="1.6" fill="none"/><path d="M396.9 75.8v3.2M397.9 77.5v3.0M398.8 80.4v1.3M402.3 85.0v1.3M404.0 80.4v3.2M406.4 74.7v3.2M408.9 72.0v2.8M412.4 77.9v1.3M414.1 75.2v3.8M418.4 71.0v3.6M420.1 75.0v1.3M423.5 73.2v1.4M425.2 70.1v6.6" stroke="#ff2424" stroke-width="1.6" fill="none"/><path d="M393.3 75.8v1.3M394.2 76.8v1.8M395.1 76.6v1.3M400.6 85.0v1.4M409.8 72.0v1.3M411.6 77.3v1.3M413.3 76.2v2.8M415.8 74.6v1.3M416.7 73.6v1.3M417.5 73.6v3.7M420.9 75.0v1.3M422.6 74.5v1.3M426.1 68.2v2.0M428.6 68.1v1.3" stroke="#e8d470" stroke-width="1.5" fill="none"/><path d="M431.3 67.4v4.1M433.2 70.8v3.2M440.8 73.1v3.5M441.7 71.9v4.8M444.3 71.6v3.3M446.9 74.7v1.7M455.2 76.7v5.1M457.1 82.0v3.0M458.9 83.8v2.7M462.6 91.6v3.0" stroke="#2484ff" stroke-width="1.6" fill="none"/><path d="M429.5 63.5v4.8M430.4 66.1v1.3M436.6 75.3v1.9M443.4 73.8v3.0M449.7 75.9v2.6M451.5 71.4v7.3M454.3 75.7v1.8M458.0 83.8v1.3M461.6 88.5v5.4M463.5 90.5v4.1M464.4 92.4v2.8M466.2 90.9v1.3" stroke="#ff2424" stroke-width="1.6" fill="none"/><path d="M432.2 71.4v1.3M434.1 73.9v1.3M435.8 75.3v1.3M437.5 76.8v1.3M440.0 74.7v1.3M442.6 76.7v1.3M445.1 71.6v1.4M446.0 71.5v4.8M447.8 76.5v2.2M448.8 75.9v1.5M450.6 78.5v1.3M452.5 73.1v5.5M456.1 81.8v1.3M460.7 88.4v1.3M465.3 92.1v3.8" stroke="#e8d470" stroke-width="1.5" fill="none"/><path d="M435.0 73.3v2.2M439.1 74.7v1.9M459.8 86.6v1.8" stroke="#e0e0e0" stroke-width="1.5" fill="none"/><path d="M469.0 94.3v1.3M469.9 95.0v1.9M476.0 99.0v4.1M481.1 99.2v2.3M484.5 99.0v1.3M489.1 93.4v1.3M496.5 93.3v1.9M497.4 94.2v2.9M500.1 95.5v2.0" stroke="#2484ff" stroke-width="1.6" fill="none"/><path d="M467.1 90.9v1.3M468.1 92.1v2.2M471.7 93.5v3.1M474.2 96.6v2.2M477.7 103.0v2.1M479.4 103.6v3.0M480.2 101.4v2.2M482.8 97.9v2.6M488.2 93.4v7.7M490.0 94.3v1.3M490.9 93.0v2.4M491.8 94.8v1.3M493.7 94.3v1.9M501.9 95.2v2.3M502.9 94.9v2.6M503.8 94.9v2.5" stroke="#ff2424" stroke-width="1.6" fill="none"/><path d="M470.8 94.0v2.9M472.5 95.4v2.4M473.4 95.6v1.3M475.1 96.1v2.9M476.8 103.0v1.3M478.6 105.0v1.5M481.9 97.9v1.3M485.4 99.5v1.3M486.3 99.5v1.3M487.2 98.6v1.3M494.6 94.3v1.4M498.3 97.1v2.0M499.2 97.6v1.3M501.0 95.2v1.3" stroke="#e8d470" stroke-width="1.5" fill="none"/><path d="M483.6 96.9v3.7" stroke="#e0e0e0" stroke-width="1.5" fill="none"/><path d="M506.5 96.6v2.3M512.0 94.2v1.3M512.9 95.5v1.3M516.7 93.2v3.5M517.6 95.3v1.3M520.1 96.9v3.8M528.7 98.7v3.2M532.9 93.2v2.2M535.4 87.8v3.4M539.6 80.9v2.3M540.5 80.9v1.3" stroke="#2484ff" stroke-width="1.6" fill="none"/><path d="M510.2 94.7v1.8M514.8 95.8v3.1M515.7 93.2v3.6M524.4 102.7v1.7M525.3 102.5v1.9M527.0 101.2v1.5M533.8 93.2v1.3M534.6 91.2v4.0M536.2 86.9v3.6M537.1 86.9v1.3M537.9 83.8v4.3M541.4 80.9v1.3" stroke="#ff2424" stroke-width="1.6" fill="none"/><path d="M504.7 97.3v1.3M505.6 96.6v1.3M507.4 95.3v3.6M508.3 96.8v3.0M509.2 96.4v1.3M511.1 94.2v1.3M513.9 95.8v1.3M521.9 98.8v4.1M522.7 98.3v4.6M526.1 102.5v3.2M527.8 101.2v1.3M529.6 97.1v3.9M530.4 97.1v1.3M531.3 97.2v1.3M532.1 94.6v2.7M538.8 83.3v1.3" stroke="#e8d470" stroke-width="1.5" fill="none"/><path d="M523.5 100.9v1.8" stroke="#e0e0e0" stroke-width="1.5" fill="none"/><path d="M544.1 82.3v1.3M545.0 82.2v5.3M548.7 82.4v1.6M549.6 84.1v3.4M554.2 84.0v2.2M558.8 85.4v3.3M559.8 87.4v1.3M560.7 84.5v2.9M562.5 85.7v3.3M567.1 87.0v2.0M568.0 86.8v3.2M571.7 83.8v4.0M574.5 89.1v1.3M575.5 88.4v4.2" stroke="#2484ff" stroke-width="1.6" fill="none"/><path d="M542.3 79.6v1.4M543.2 79.6v2.7M546.8 82.7v4.9M556.1 83.3v2.5M561.6 83.6v2.1M565.2 87.7v1.3M572.6 83.4v2.3M573.6 85.6v3.5M576.4 92.7v1.5M579.0 87.5v7.4M580.7 84.1v3.0" stroke="#ff2424" stroke-width="1.6" fill="none"/><path d="M547.8 80.6v2.1M550.5 85.9v1.3M552.4 85.5v1.3M555.1 85.9v1.3M557.0 85.1v2.1M557.9 85.1v1.6M563.4 86.9v1.3M564.3 87.8v3.5M566.2 85.1v3.9M568.9 85.2v1.6M569.8 84.6v1.3M570.8 83.8v3.0M577.2 94.0v1.3M578.1 94.0v1.3M579.8 87.1v1.3" stroke="#e8d470" stroke-width="1.5" fill="none"/><path d="M585.8 82.4v1.3M592.7 81.2v1.3M596.1 83.5v3.6M597.8 85.4v1.7M599.5 83.1v1.8M605.8 84.6v2.4M607.6 83.3v4.5M612.8 82.3v1.4M613.7 76.1v6.3M617.1 75.5v1.7M620.6 75.2v1.9" stroke="#2484ff" stroke-width="1.6" fill="none"/><path d="M583.3 85.1v1.3M585.0 83.7v1.3M586.7 81.7v3.2M587.6 81.7v2.5M589.3 82.2v4.0M593.5 81.9v3.4M602.1 82.8v4.6M609.4 81.9v2.6M614.5 77.9v1.3M615.4 75.7v2.2" stroke="#ff2424" stroke-width="1.6" fill="none"/><path d="M588.4 84.2v1.3M590.1 82.5v2.9M591.0 80.5v4.0M591.9 79.0v2.7M595.2 85.6v1.3M597.0 87.1v1.3M598.7 84.2v2.9M600.4 84.8v1.3M601.3 80.1v4.7M608.5 84.5v1.3M611.1 82.7v1.3M612.0 83.2v1.6M616.3 75.5v1.3M618.0 77.3v1.3" stroke="#e8d470" stroke-width="1.5" fill="none"/><path d="M581.5 82.6v5.3M603.0 85.1v3.9M606.7 81.1v3.5M610.2 82.7v1.3M618.9 75.6v2.0" stroke="#e0e0e0" stroke-width="1.5" fill="none"/><path d="M622.4 75.8v2.2M625.0 72.8v4.9M625.9 72.8v1.3M626.7 71.0v3.8M628.5 72.9v2.5M629.4 73.6v3.8M631.1 70.1v3.1M632.9 75.0v4.9M634.6 82.3v2.6M636.3 84.7v3.8M637.1 86.5v6.6M638.8 91.8v2.8M640.6 96.3v2.2M641.5 98.5v4.1M643.4 104.2v5.4M644.3 107.0v4.1M653.9 96.5v3.3M655.8 94.4v3.8M656.7 91.7v2.7M657.6 90.6v1.3" stroke="#2484ff" stroke-width="1.6" fill="none"/><path d="M630.2 71.2v2.4M632.0 72.0v3.0M633.7 79.9v5.2M646.0 108.1v4.0M647.8 105.0v3.4M648.6 102.5v3.7M649.5 101.6v1.3M652.1 100.4v2.0M654.8 95.2v2.1" stroke="#ff2424" stroke-width="1.6" fill="none"/><path d="M621.5 75.8v1.3M623.3 77.9v1.3M624.1 76.1v1.8M627.6 72.9v1.3M635.4 84.9v1.3M638.0 93.0v2.6M639.7 94.6v1.7M646.9 107.1v3.8M650.3 101.6v1.3M651.2 100.9v1.9" stroke="#e8d470" stroke-width="1.5" fill="none"/><path d="M642.5 102.6v1.6" stroke="#e0e0e0" stroke-width="1.5" fill="none"/><path d="M658.5 89.8v1.7M662.1 91.2v2.0M664.0 92.7v2.0M666.6 93.3v4.0M673.5 91.3v1.9M674.4 93.2v3.7M677.0 93.3v5.8M678.7 98.8v1.3M679.6 96.7v3.4M680.5 96.7v1.3M681.5 97.7v2.2M682.4 99.9v1.6M685.1 96.5v4.9M686.8 98.3v4.6M687.6 102.9v1.3M691.9 107.0v8.3M692.8 113.0v7.0M693.8 120.0v8.7M694.7 128.7v4.3M695.6 130.4v7.7M696.5 138.1v6.0" stroke="#2484ff" stroke-width="1.6" fill="none"/><path d="M660.3 89.1v2.2M665.8 94.6v2.6M668.3 92.3v1.7M675.2 95.0v1.9M683.3 98.2v3.3M684.2 95.5v5.1M685.9 98.3v3.1M690.1 103.7v3.3M691.0 103.7v3.3" stroke="#ff2424" stroke-width="1.6" fill="none"/><path d="M663.1 92.7v1.3M664.9 94.6v1.3M667.5 93.3v1.3M670.1 91.5v1.4M670.9 89.7v3.5M671.8 91.3v1.9M672.7 89.8v1.6M676.1 93.3v2.6M677.8 98.8v1.3M689.3 103.5v1.3" stroke="#e8d470" stroke-width="1.5" fill="none"/><path d="M697.4 143.6v2.0M698.2 140.2v3.4M699.1 137.0v3.2M704.3 123.1v4.5M705.3 126.5v3.0M706.2 127.4v9.7M707.1 131.2v6.0M709.0 130.1v3.1M713.3 122.6v6.9M715.8 127.0v3.6M716.6 129.4v1.3M725.1 128.4v5.6M730.2 143.0v3.3" stroke="#2484ff" stroke-width="1.6" fill="none"/><path d="M700.0 133.7v3.3M700.8 127.3v6.4M702.5 125.3v5.7M703.4 123.1v2.2M709.9 127.1v3.0M711.7 124.3v3.7M718.3 127.1v4.0M719.2 123.2v5.1M720.9 124.3v2.8M721.7 127.0v2.2M723.4 125.7v3.6M726.8 131.9v3.5M728.5 136.9v2.8M729.3 139.7v3.3M731.0 146.2v3.0M733.0 147.0v1.8M735.0 140.0v5.7" stroke="#ff2424" stroke-width="1.6" fill="none"/><path d="M710.8 127.0v1.3M714.2 126.8v2.8M715.0 124.6v2.6M717.5 129.0v1.3M724.2 128.0v1.3M725.9 133.4v2.0M727.6 135.3v1.6M732.0 147.8v1.4M734.0 145.7v1.3" stroke="#e8d470" stroke-width="1.5" fill="none"/><path d="M701.7 129.2v1.8" stroke="#e0e0e0" stroke-width="1.5" fill="none"/><path d="M739.6 141.6v6.6M740.5 145.4v1.4M743.3 145.8v1.3M744.2 147.0v4.5M745.1 151.5v3.9M747.0 156.7v1.3M747.9 154.2v7.1M751.5 156.7v2.4M758.0 152.1v1.6M759.8 153.8v7.8M760.7 159.2v1.3M761.7 160.2v1.6M762.6 159.2v2.5M765.4 162.5v1.5M767.2 162.5v1.3M773.7 162.4v1.3" stroke="#2484ff" stroke-width="1.6" fill="none"/><path d="M735.9 137.4v4.7M741.5 146.8v1.5M742.4 143.3v5.0M746.0 155.4v3.9M748.8 160.3v5.9M749.7 162.9v1.5M750.6 159.1v3.8M752.5 155.3v1.5M753.4 152.4v2.9M754.3 150.9v3.5M756.1 151.8v1.7M764.4 159.4v4.6M766.3 162.5v1.5M768.1 163.7v1.5M771.8 164.4v1.3M772.8 162.4v1.9" stroke="#ff2424" stroke-width="1.6" fill="none"/><path d="M738.7 143.0v1.3M755.2 150.9v2.6M757.0 151.8v1.3M758.9 153.7v1.3M763.5 159.2v1.3M769.1 163.4v1.8M770.0 163.7v2.2" stroke="#e8d470" stroke-width="1.5" fill="none"/><path d="M770.9 164.9v1.3" stroke="#e0e0e0" stroke-width="1.5" fill="none"/><path d="M776.4 164.9v1.3M779.2 152.2v3.1M788.8 145.6v1.7M790.6 145.2v1.3M798.4 145.3v3.8M799.3 147.2v1.3M804.0 151.1v1.3M810.4 148.3v6.1" stroke="#2484ff" stroke-width="1.6" fill="none"/><path d="M774.6 163.0v2.2M777.3 161.1v3.8M778.2 155.3v8.1M781.0 148.2v4.0M781.8 145.3v5.3M782.6 150.6v2.2M784.3 150.3v1.3M786.0 150.7v1.3M786.9 148.8v2.7M787.9 147.3v1.5M794.0 145.3v1.5M795.8 146.8v2.2M800.3 148.4v2.5M803.0 149.5v1.6M805.8 150.3v1.4M806.7 148.5v1.9M807.6 148.5v2.7M808.5 149.7v1.4M809.5 148.3v1.4" stroke="#ff2424" stroke-width="1.6" fill="none"/><path d="M775.5 165.2v1.3M780.1 150.4v4.6M783.5 150.9v1.3M785.1 148.0v2.7M789.7 145.2v1.3M791.5 144.8v1.3M793.2 145.8v1.6M794.9 146.8v1.3M796.6 144.5v4.5M797.5 145.3v2.0M801.2 147.1v4.8M802.1 147.9v1.6M804.9 150.7v1.8" stroke="#e8d470" stroke-width="1.5" fill="none"/><path d="M813.9 152.4v5.7M817.2 159.6v2.7M818.1 161.4v6.4M823.6 146.8v2.6M826.4 143.7v3.3M829.1 140.4v5.0M830.0 141.8v4.0M832.8 140.4v4.9M840.8 137.7v2.4M846.1 137.1v3.9M847.9 137.0v5.1M849.8 139.1v2.8" stroke="#2484ff" stroke-width="1.6" fill="none"/><path d="M814.7 157.2v3.0M816.4 158.3v2.2M819.0 160.4v5.4M819.9 158.9v1.5M821.8 152.2v6.7M822.7 149.3v5.1M824.5 145.9v1.3M825.4 145.9v1.3M828.2 140.3v4.0M830.9 139.6v2.2M833.7 142.0v1.3M834.6 138.9v3.1M835.6 137.4v5.5M836.5 141.4v1.5M837.4 140.2v1.3M841.7 136.7v1.3M844.3 138.3v1.3M845.2 137.1v1.3M847.0 138.7v2.3" stroke="#ff2424" stroke-width="1.6" fill="none"/><path d="M811.3 152.0v1.3M812.1 152.3v2.8M813.0 153.2v1.3M820.9 158.8v1.3M827.3 143.7v1.3M840.0 139.8v1.3M843.4 138.2v3.1M848.9 139.6v2.5" stroke="#e8d470" stroke-width="1.5" fill="none"/><path d="M842.6 135.0v3.2" stroke="#e0e0e0" stroke-width="1.5" fill="none"/><path d="M850.7 139.1v4.0M852.5 141.4v1.3M856.2 141.2v3.2M858.9 145.6v2.8M860.8 144.8v4.5M864.4 140.8v4.3M866.3 142.2v1.9M867.2 141.0v3.2M870.0 140.3v3.1M870.9 139.2v2.1M872.7 140.3v2.3M875.4 145.3v2.7M879.1 146.0v3.2M884.6 150.0v3.3M888.3 151.3v1.9" stroke="#2484ff" stroke-width="1.6" fill="none"/><path d="M851.6 141.4v3.2M863.5 140.8v2.3M865.3 142.2v1.3M868.1 143.0v1.3M869.0 138.5v4.5M873.6 140.6v4.3M874.5 144.9v4.2M876.4 144.1v1.3M877.3 143.2v3.3M878.2 143.2v5.2M880.0 145.3v2.3M886.5 153.2v1.3M887.4 151.3v1.9" stroke="#ff2424" stroke-width="1.6" fill="none"/><path d="M853.4 141.2v4.4M855.2 142.0v3.0M857.1 141.3v3.1M858.0 142.2v3.4M859.8 147.9v1.3M862.6 142.8v1.3M871.8 139.2v1.3M881.8 147.1v1.3M882.8 146.3v2.9M883.7 149.2v1.3M889.2 151.4v1.8" stroke="#e8d470" stroke-width="1.5" fill="none"/><path d="M861.7 142.8v2.0" stroke="#e0e0e0" stroke-width="1.5" fill="none"/><path d="M892.9 151.7v1.8M899.3 151.5v4.8M900.2 153.1v4.4M903.0 153.3v5.3M904.8 156.5v4.2M908.4 155.7v2.6M911.2 155.8v3.0M912.1 156.3v3.6M915.8 158.6v3.2M917.6 157.0v3.0M919.5 159.4v2.5M923.1 158.7v5.3M926.8 167.8v2.0" stroke="#2484ff" stroke-width="1.6" fill="none"/><path d="M890.1 150.8v1.3M894.7 150.4v3.5M921.3 155.9v6.4M924.1 164.0v2.0M925.0 166.0v1.8" stroke="#ff2424" stroke-width="1.6" fill="none"/><path d="M891.0 150.8v1.3M891.9 150.8v1.3M893.8 153.1v1.3M896.5 148.6v2.2M897.4 150.5v1.3M898.3 151.4v1.3M901.1 153.1v1.3M902.0 152.2v1.3M903.9 155.6v2.9M905.7 156.8v1.3M906.6 156.8v1.3M909.4 157.3v1.3M910.3 157.5v1.3M913.0 158.1v1.3M913.9 158.1v1.9M916.7 157.3v2.7M920.4 157.9v1.5M925.9 167.8v1.8" stroke="#e8d470" stroke-width="1.5" fill="none"/><path d="M895.6 148.8v3.4M907.5 154.7v2.5M918.5 160.0v1.9M922.2 160.4v1.8" stroke="#e0e0e0" stroke-width="1.5" fill="none"/><path d="M927.8 169.8v1.3M928.7 170.8v1.3M930.5 171.8v1.9M932.3 173.8v4.3M933.2 175.9v1.3M936.9 171.8v2.0M943.3 160.9v5.2M946.9 155.7v4.5M947.8 158.9v2.0M949.7 160.4v3.4M950.6 163.8v1.4M952.5 163.5v4.1M960.7 158.7v4.0" stroke="#2484ff" stroke-width="1.6" fill="none"/><path d="M931.4 172.4v1.4M935.0 172.7v3.6M938.7 169.8v2.0M944.2 159.3v3.6M945.1 159.3v1.7M946.0 157.5v4.4M956.1 166.7v2.8M959.8 162.6v1.3" stroke="#ff2424" stroke-width="1.6" fill="none"/><path d="M929.6 171.8v1.3M934.1 176.3v1.3M935.9 173.8v1.3M937.8 171.8v1.3M939.7 169.8v1.3M941.5 167.3v1.9M951.5 165.3v1.3M953.4 167.5v4.4M955.2 169.2v2.4M958.0 163.5v1.7M958.9 163.5v1.3M961.6 159.0v1.5M962.5 160.4v1.3M963.5 161.5v1.3M965.3 160.5v4.5" stroke="#e8d470" stroke-width="1.5" fill="none"/><path d="M948.8 161.0v1.7M957.0 165.2v1.4" stroke="#e0e0e0" stroke-width="1.5" fill="none"/></g>
<g clip-path="url(#c2)"><path d="M10.1 335.2v1.3M11.0 336.0v5.8M14.7 340.9v3.4M20.2 341.6v3.0M22.0 339.2v4.6M26.6 337.4v3.6M31.2 335.7v1.3M32.1 335.6v4.5M34.0 334.2v2.8M34.9 333.6v2.4M37.7 330.9v1.7M41.4 329.1v2.2M42.2 331.3v2.8M43.1 334.1v1.3M46.8 336.1v3.9" stroke="#2484ff" stroke-width="1.6" fill="none"/><path d="M15.6 340.2v4.1M17.4 336.0v6.0M21.1 339.2v5.3M23.9 339.0v4.7M25.7 337.4v2.9M28.5 339.0v1.3M30.3 335.7v1.6M35.8 328.3v5.2M36.7 329.9v2.8M38.6 328.6v2.3M45.9 334.6v1.5" stroke="#ff2424" stroke-width="1.6" fill="none"/><path d="M9.2 331.7v5.7M11.9 341.5v1.3M12.9 340.5v1.3M13.8 340.5v1.3M16.5 339.9v2.2M19.3 339.4v2.6M27.5 340.0v1.3M29.4 337.3v1.7M39.6 328.6v1.3M40.5 328.6v1.6M44.0 333.8v2.7M44.9 333.8v2.2" stroke="#e8d470" stroke-width="1.5" fill="none"/><path d="M24.8 339.0v1.3M33.0 333.1v2.5" stroke="#e0e0e0" stroke-width="1.5" fill="none"/><path d="M47.7 340.0v1.7M48.6 341.8v5.3M49.5 347.1v2.9M51.4 350.4v5.5M52.3 354.7v6.2M55.0 364.4v4.2M56.0 365.0v8.1M56.9 371.8v1.9M57.8 373.8v1.9M58.7 375.7v6.0M60.5 380.3v3.0M62.4 377.1v7.7M63.3 384.8v6.5M74.3 370.4v8.0M77.0 378.2v1.3M77.9 374.9v4.6M79.8 374.8v1.3" stroke="#2484ff" stroke-width="1.6" fill="none"/><path d="M54.1 362.4v3.1M61.5 380.9v5.5M64.2 388.3v2.9M65.1 387.8v1.7M66.0 382.6v5.2M67.0 380.3v3.2M67.9 376.5v7.2M69.7 376.3v3.7M73.3 373.8v3.0M76.1 378.7v2.8M80.7 372.8v1.9M82.6 373.7v1.3M83.5 370.5v3.8" stroke="#ff2424" stroke-width="1.6" fill="none"/><path d="M50.5 349.9v1.3M53.2 360.9v4.0M59.6 380.3v1.4M68.8 376.5v4.2M71.5 376.9v4.9M72.4 376.8v1.3M75.2 377.5v1.3M78.9 374.9v1.3M81.7 372.8v1.3" stroke="#e8d470" stroke-width="1.5" fill="none"/><path d="M70.6 376.3v5.3" stroke="#e0e0e0" stroke-width="1.5" fill="none"/><path d="M84.4 368.6v8.2M86.2 371.5v4.2M88.1 375.6v3.9M89.0 376.4v6.1M90.8 379.5v3.9M92.6 384.1v1.6M95.4 383.9v1.3M96.3 380.3v4.6M97.2 384.0v4.9M100.0 383.1v3.8M103.7 376.5v4.8M113.7 378.8v4.0M120.1 378.3v4.6" stroke="#2484ff" stroke-width="1.6" fill="none"/><path d="M85.3 371.5v4.6M89.9 379.5v1.3M91.7 383.4v1.3M93.6 383.4v1.3M98.1 385.3v3.6M101.8 380.1v2.5M102.8 374.5v5.6M104.6 380.3v1.3M105.5 377.1v3.2M107.3 377.9v6.1M110.0 380.1v6.0M110.9 380.3v2.1M114.6 378.7v4.1M118.3 376.9v1.3M119.2 374.6v3.6" stroke="#ff2424" stroke-width="1.6" fill="none"/><path d="M87.2 373.2v2.5M94.5 381.2v2.7M99.0 385.1v1.3M100.9 382.6v1.3M106.4 377.1v1.3M108.2 380.1v1.3M109.1 380.1v4.2M111.8 378.7v1.5M112.8 377.1v1.7M115.6 377.8v4.7M117.4 376.3v1.3" stroke="#e8d470" stroke-width="1.5" fill="none"/><path d="M116.5 376.3v5.0" stroke="#e0e0e0" stroke-width="1.5" fill="none"/><path d="M125.6 370.9v2.7M127.5 368.4v3.1M130.2 365.3v3.6M133.9 362.5v2.5M148.6 345.0v1.5M149.5 345.0v1.6M150.4 344.3v2.4M153.2 341.8v2.8M156.9 333.9v3.8" stroke="#2484ff" stroke-width="1.6" fill="none"/><path d="M121.0 380.0v1.3M121.9 376.4v7.3M123.8 374.3v3.2M128.4 365.7v5.9M129.3 363.8v3.1M131.2 365.9v5.6M134.8 362.5v3.0M135.7 364.6v1.3M137.6 361.0v2.5M138.5 361.0v2.1M140.3 362.0v1.3M141.2 357.9v4.1M144.0 352.9v3.7M145.0 350.2v2.7M147.7 346.5v4.2M151.4 342.8v1.4M152.3 341.8v2.8M154.1 340.1v6.6M155.0 337.2v5.5M155.9 333.9v6.9M157.8 331.3v4.1" stroke="#ff2424" stroke-width="1.6" fill="none"/><path d="M126.6 370.9v3.4M132.1 362.2v3.7M139.4 362.8v1.3M142.2 356.3v3.6M143.1 352.6v4.0M145.9 349.7v1.4M146.8 349.7v1.3" stroke="#e8d470" stroke-width="1.5" fill="none"/><path d="M122.8 373.1v6.7M124.7 373.6v2.2M136.7 363.6v1.3" stroke="#e0e0e0" stroke-width="1.5" fill="none"/><path d="M158.7 331.3v1.3M165.2 314.6v2.3M170.7 315.1v3.4M172.5 318.2v4.7M174.3 318.8v1.3M181.6 316.4v3.4M183.5 319.7v2.7M184.4 322.3v4.1M185.3 323.5v6.2M186.2 323.5v3.7M189.0 323.0v7.9M189.9 325.6v1.3M190.9 325.6v3.6M193.6 321.3v1.3" stroke="#2484ff" stroke-width="1.6" fill="none"/><path d="M160.6 330.4v5.4M161.5 326.8v6.5M162.4 318.9v8.0M163.3 319.9v2.5M164.2 316.0v3.8M166.1 304.9v14.0M167.9 308.8v3.1M168.8 311.9v2.8M173.4 315.9v7.0M175.2 318.7v3.3M178.0 315.4v4.2M178.9 317.0v1.8M179.8 312.1v4.9M180.7 312.3v4.1M182.6 314.1v5.6M191.8 324.4v1.9M192.7 321.3v3.1M194.6 320.0v2.6M195.5 316.1v7.0" stroke="#ff2424" stroke-width="1.6" fill="none"/><path d="M159.7 329.4v2.6M167.0 308.8v1.3M169.8 314.7v1.3M171.6 318.2v1.3" stroke="#e8d470" stroke-width="1.5" fill="none"/><path d="M177.1 318.9v1.3M187.2 327.1v2.2M188.1 326.2v2.2" stroke="#e0e0e0" stroke-width="1.5" fill="none"/><path d="M196.4 316.1v5.4M199.2 319.3v7.3M200.1 324.4v6.2M203.7 322.2v6.7M205.6 324.3v4.6M206.5 327.8v3.7M209.3 328.0v2.2M211.1 331.9v4.1M212.9 336.4v3.3M214.8 339.8v4.4M215.7 338.4v6.6M216.6 338.8v3.4M218.4 343.0v1.3M227.7 336.5v1.3M228.6 334.0v3.4M229.5 334.0v1.3M230.4 330.8v4.3M231.3 332.8v1.3M235.0 327.2v2.9" stroke="#2484ff" stroke-width="1.6" fill="none"/><path d="M201.0 323.6v3.8M204.7 325.3v4.8M208.3 328.0v1.3M212.0 334.4v2.0M220.3 342.1v2.5M224.0 339.7v5.8M232.2 332.0v1.5M234.1 328.5v5.1" stroke="#ff2424" stroke-width="1.6" fill="none"/><path d="M197.3 316.0v3.7M198.2 319.3v1.3M201.9 322.2v1.3M202.8 318.8v5.9M207.4 329.0v1.3M210.2 330.2v1.7M213.8 336.4v5.5M217.5 342.2v1.3M222.1 341.4v1.7M224.9 334.6v5.2M225.8 337.2v4.4M226.7 336.5v4.6M233.2 332.0v2.5" stroke="#e8d470" stroke-width="1.5" fill="none"/><path d="M238.7 320.1v5.8M245.1 320.7v1.8M246.0 321.6v1.3M248.8 320.8v6.7M250.6 318.4v5.0M252.4 315.6v5.5M257.9 311.9v2.0M262.5 313.2v1.3M268.0 314.3v1.3M269.8 316.2v5.7M272.6 317.8v2.0M273.5 318.0v5.7" stroke="#2484ff" stroke-width="1.6" fill="none"/><path d="M236.8 324.4v1.5M239.6 322.4v4.5M240.5 322.4v5.6M241.4 320.9v4.9M243.2 321.3v2.4M246.9 321.6v2.8M251.5 319.1v3.0M253.3 320.0v1.3M254.2 317.8v3.2M256.1 315.8v1.3M258.8 307.8v4.0M264.3 313.8v3.9M266.1 314.9v1.3M270.8 315.6v2.7" stroke="#ff2424" stroke-width="1.6" fill="none"/><path d="M235.9 323.6v3.7M237.7 321.9v4.0M242.3 320.2v3.5M247.8 317.6v5.4M255.2 316.4v1.4M257.0 313.9v1.9M259.7 311.2v1.5M260.6 312.7v1.3M261.5 313.1v1.3M263.4 312.5v2.2M265.2 313.8v1.9M267.1 314.9v1.3M268.9 314.3v1.9" stroke="#e8d470" stroke-width="1.5" fill="none"/><path d="M244.2 320.7v1.3" stroke="#e0e0e0" stroke-width="1.5" fill="none"/><path d="M276.3 309.4v9.5M277.2 313.4v1.3M278.1 309.8v4.6M279.9 313.2v4.8M283.6 318.6v4.9M286.3 320.3v6.4M287.2 322.2v1.3M290.0 318.1v2.2M292.7 313.6v1.3M295.5 309.7v3.3M296.4 310.8v2.3M298.2 306.9v3.2M299.2 306.8v4.5M300.1 304.4v2.5M303.8 299.3v5.2M305.6 294.2v1.6" stroke="#2484ff" stroke-width="1.6" fill="none"/><path d="M274.4 314.4v3.6M281.8 318.1v2.8M288.2 319.9v2.2M290.9 316.2v1.9M291.8 311.3v4.9M293.6 311.0v5.8M294.6 309.7v3.5M297.3 309.3v5.3M301.9 303.2v3.2M302.9 301.4v1.9M304.7 292.6v8.0M306.5 292.1v6.0M307.5 286.1v6.0M308.4 287.9v2.5M310.2 289.0v2.9M311.1 286.9v2.1" stroke="#ff2424" stroke-width="1.6" fill="none"/><path d="M275.4 315.6v1.3M279.0 311.5v2.9M282.7 320.7v1.3M284.5 321.2v1.3M289.1 319.9v1.3M301.0 304.4v2.2M309.3 290.4v1.3" stroke="#e8d470" stroke-width="1.5" fill="none"/><path d="M280.9 318.1v1.6" stroke="#e0e0e0" stroke-width="1.5" fill="none"/><path d="M312.0 286.9v3.7M316.6 291.8v5.6M318.4 292.6v6.3M320.2 295.0v1.3M323.0 292.4v3.2M325.8 290.7v4.9M328.5 289.7v4.5M330.4 294.0v1.3M333.1 299.1v8.4M340.5 283.2v5.5M344.1 277.9v5.9M346.9 276.9v1.3M347.8 274.6v3.4M348.7 274.6v1.4" stroke="#2484ff" stroke-width="1.6" fill="none"/><path d="M314.8 291.7v1.3M317.5 292.6v1.8M321.2 293.1v2.5M322.1 292.4v1.3M324.8 292.9v1.3M327.6 289.7v3.7M332.2 296.3v5.5M335.0 300.5v2.6M335.9 293.3v7.2M341.4 283.2v5.5M342.3 284.3v3.6M345.1 278.5v2.9M346.0 276.9v1.6" stroke="#ff2424" stroke-width="1.6" fill="none"/><path d="M312.9 290.6v2.6M315.7 291.7v1.8M319.3 292.4v4.1M323.9 293.0v2.6M329.4 294.0v4.0M331.3 294.6v1.7M334.0 303.1v2.5M336.8 293.3v1.6M337.7 289.5v6.8M338.6 289.6v4.5M339.6 288.6v1.3M343.2 283.8v1.3" stroke="#e8d470" stroke-width="1.5" fill="none"/><path d="M313.8 291.1v1.5" stroke="#e0e0e0" stroke-width="1.5" fill="none"/><path d="M352.4 267.9v5.8M354.2 265.1v10.5M357.0 276.8v2.1M358.8 278.4v1.6M359.7 280.0v3.4M360.6 280.9v9.2M361.5 283.9v2.6M362.5 283.9v3.0M364.3 287.7v3.5M365.2 291.1v3.7M367.0 292.6v6.5M368.0 296.8v4.4M370.8 298.3v7.2M374.4 297.4v3.1M375.4 294.2v8.6M383.7 284.1v5.8M384.6 285.3v7.8M389.2 290.4v1.3" stroke="#2484ff" stroke-width="1.6" fill="none"/><path d="M351.5 273.7v2.2M353.3 268.7v2.5M355.1 275.6v3.2M356.1 273.5v7.2M357.9 278.4v2.0M369.8 300.7v1.3M371.7 301.9v5.9M372.6 304.4v3.5M373.5 300.6v3.8M376.3 292.1v8.2M377.2 290.0v4.8M381.8 290.2v1.3" stroke="#ff2424" stroke-width="1.6" fill="none"/><path d="M363.4 286.9v1.9M366.1 294.8v1.3M368.9 301.2v1.3M378.1 291.6v1.3M379.1 290.0v5.4M382.8 287.6v2.5M386.4 286.8v4.1" stroke="#e8d470" stroke-width="1.5" fill="none"/><path d="M349.6 276.0v1.3M380.0 290.0v1.7M385.5 290.6v2.7" stroke="#e0e0e0" stroke-width="1.5" fill="none"/><path d="M396.5 291.1v2.6M398.3 291.9v3.7M399.2 293.5v3.2M400.1 296.7v1.3M401.0 297.9v4.5M401.9 300.0v2.1M404.7 296.0v3.2M410.3 278.5v7.9M416.6 275.2v5.9M417.6 275.6v2.4M418.5 275.6v7.5M419.4 276.7v3.0M426.8 269.8v7.1M428.6 272.3v1.3" stroke="#2484ff" stroke-width="1.6" fill="none"/><path d="M394.6 289.7v3.3M395.6 291.1v1.3M403.8 299.2v4.6M405.7 289.6v10.3M406.7 284.6v5.1M407.6 283.2v4.9M408.6 277.9v8.5M409.5 276.3v7.2M412.1 280.3v6.0M413.8 284.5v3.2M414.7 283.3v1.3M415.7 278.7v4.6M421.2 270.9v4.5M422.2 269.0v8.2M423.1 265.8v3.2M424.0 267.8v2.1M425.8 269.6v2.8M427.7 273.3v7.3" stroke="#ff2424" stroke-width="1.6" fill="none"/><path d="M390.1 290.4v3.6M391.0 290.5v1.3M393.7 291.6v1.4M420.3 275.4v1.3M424.9 267.7v2.2" stroke="#e8d470" stroke-width="1.5" fill="none"/><path d="M397.4 291.9v1.8M402.8 302.0v1.8M412.9 286.3v1.4" stroke="#e0e0e0" stroke-width="1.5" fill="none"/><path d="M430.4 270.5v8.0M431.4 274.2v5.0M437.8 274.5v1.7M439.6 269.1v6.3M440.6 272.6v4.8M451.6 275.1v2.8M453.4 274.6v3.6M454.3 276.0v2.0M457.1 280.0v3.3M458.9 280.5v5.0M462.6 283.1v2.1M463.5 283.1v4.4M464.4 286.6v5.7M466.2 285.0v4.9" stroke="#2484ff" stroke-width="1.6" fill="none"/><path d="M432.3 277.7v5.4M433.2 278.4v2.0M434.1 275.3v5.1M435.0 276.6v1.3M436.9 274.5v3.6M444.2 273.1v2.2M445.1 272.0v6.2M446.0 270.4v7.1M447.9 272.9v3.6M448.8 272.9v5.0M455.2 278.0v2.1M459.8 281.6v4.4M467.1 288.0v1.3" stroke="#ff2424" stroke-width="1.6" fill="none"/><path d="M429.5 272.3v1.3M436.0 277.7v2.0M438.7 275.5v1.3M441.5 272.2v3.0M443.3 275.2v1.8M447.0 273.8v1.3M449.7 273.6v1.7M452.5 277.9v1.3M456.2 280.0v1.3M460.8 283.1v1.3M465.3 289.8v1.6" stroke="#e8d470" stroke-width="1.5" fill="none"/><path d="M442.4 275.1v1.9M450.6 273.6v1.5" stroke="#e0e0e0" stroke-width="1.5" fill="none"/><path d="M468.0 288.0v2.7M469.9 285.9v10.2M477.2 297.4v3.1M480.0 295.6v5.5M482.8 292.1v1.3M485.5 285.6v5.2M487.3 283.6v1.6M488.2 283.6v1.7M503.0 280.0v4.2" stroke="#2484ff" stroke-width="1.6" fill="none"/><path d="M469.0 289.8v3.0M470.8 294.9v1.3M471.7 293.1v1.8M473.5 292.6v6.3M474.4 293.6v3.1M475.4 293.6v3.3M478.1 297.6v5.2M480.9 291.2v7.0M486.4 285.2v6.1M491.0 284.8v1.3M492.8 284.5v3.3M493.8 286.2v3.4M494.7 284.5v1.7M501.1 277.5v1.8M502.1 277.5v2.5M503.9 280.4v6.7" stroke="#ff2424" stroke-width="1.6" fill="none"/><path d="M472.6 292.6v2.0M476.3 296.9v2.9M479.1 296.7v1.3M483.7 292.7v1.3M484.6 290.8v5.7M489.2 285.3v1.3M490.1 281.6v4.8M491.9 284.5v1.3M495.6 281.0v3.5M496.5 282.7v1.7M497.4 282.7v1.5M499.3 280.4v3.8M500.2 277.9v6.2M504.8 285.1v4.5" stroke="#e8d470" stroke-width="1.5" fill="none"/><path d="M481.8 291.2v1.3" stroke="#e0e0e0" stroke-width="1.5" fill="none"/><path d="M506.6 282.8v4.9M507.5 284.7v2.9M509.4 281.0v8.2M513.0 282.4v2.8M516.7 283.1v2.3M517.6 283.6v7.0M521.3 289.4v1.3M523.1 291.7v1.8M524.0 290.1v1.6M529.6 284.2v3.9M533.2 276.1v2.9M542.4 261.2v5.5M543.3 262.6v1.3M544.2 262.6v3.2" stroke="#2484ff" stroke-width="1.6" fill="none"/><path d="M508.5 283.6v1.3M510.3 283.2v2.5M513.9 280.7v4.6M515.8 283.1v2.9M518.5 286.9v2.0M520.4 289.4v4.0M522.2 290.1v3.4M525.9 287.5v2.8M526.8 285.9v1.6M530.5 280.7v5.9M532.3 275.4v6.2M535.1 270.6v5.3M536.0 271.1v2.0M536.9 270.4v1.3M537.8 264.5v5.9M538.7 265.2v1.5M540.5 262.7v3.2M541.5 258.3v7.3" stroke="#ff2424" stroke-width="1.6" fill="none"/><path d="M511.2 282.4v4.4M512.1 282.4v1.9M514.9 284.0v1.3M519.4 288.8v2.7M527.7 282.6v3.3M528.6 283.1v1.3M534.1 275.9v1.3" stroke="#e8d470" stroke-width="1.5" fill="none"/><path d="M539.6 265.2v1.3" stroke="#e0e0e0" stroke-width="1.5" fill="none"/><path d="M545.1 264.3v8.2M547.0 268.0v1.3M551.5 267.1v2.4M553.4 267.8v2.7M554.3 270.4v4.2M555.2 272.5v2.0M566.2 278.3v2.3M567.2 278.6v1.6M570.0 275.5v1.8M571.8 278.3v3.4M574.4 281.2v5.5M576.3 279.3v2.3M577.2 275.9v5.6M578.2 277.2v1.4" stroke="#2484ff" stroke-width="1.6" fill="none"/><path d="M546.0 268.0v1.6M552.5 267.8v1.7M558.0 275.9v4.9M559.8 276.6v1.3M561.6 277.4v1.5M562.6 277.0v1.9M564.4 275.4v2.7M565.3 278.1v2.4M568.1 276.1v4.1M570.9 277.4v1.3M573.5 279.0v3.5M575.3 281.6v7.5M579.1 274.1v7.5M581.0 273.1v6.3" stroke="#ff2424" stroke-width="1.6" fill="none"/><path d="M549.7 267.7v1.3M556.1 272.5v1.6M558.9 277.5v1.3M560.7 276.6v1.3M563.5 275.4v1.5M569.1 275.5v1.8M580.1 279.3v1.3M581.9 275.0v2.8M582.8 274.7v1.3" stroke="#e8d470" stroke-width="1.5" fill="none"/><path d="M550.6 267.1v1.3M557.1 274.1v5.4M572.6 280.7v1.8" stroke="#e0e0e0" stroke-width="1.5" fill="none"/><path d="M584.7 271.1v2.5M589.2 261.4v5.4M592.0 270.4v1.5M592.9 271.8v1.9M596.6 268.5v8.7M599.4 267.6v4.8M601.2 267.0v1.3M604.0 262.3v5.0M612.2 245.2v5.6M618.6 247.0v2.7" stroke="#2484ff" stroke-width="1.6" fill="none"/><path d="M585.6 265.4v7.4M587.4 264.2v4.1M591.1 267.8v2.6M593.8 271.8v4.8M594.8 269.2v5.6M598.4 269.3v3.7M605.8 255.7v10.2M607.6 255.1v1.4M609.5 249.9v6.9M610.4 245.2v4.6M613.1 250.8v6.5M615.0 254.1v1.3M616.8 249.4v6.6M620.3 241.1v5.6M622.1 237.5v6.1" stroke="#ff2424" stroke-width="1.6" fill="none"/><path d="M586.5 265.4v1.3M597.5 273.0v1.3M600.3 267.6v1.3M602.1 267.0v1.3M603.0 267.1v1.7M604.9 258.3v5.7M606.7 256.5v1.8M608.6 255.1v1.3M614.1 253.5v1.5M617.7 249.4v1.3M619.4 246.7v1.3M621.2 240.8v1.3" stroke="#e8d470" stroke-width="1.5" fill="none"/><path d="M583.8 271.7v3.0M588.3 263.2v3.2M590.2 266.8v1.3" stroke="#e0e0e0" stroke-width="1.5" fill="none"/><path d="M624.0 233.8v8.6M632.4 245.1v1.3M636.0 246.7v3.7M637.8 250.0v2.3M639.7 251.0v2.2M641.5 249.2v6.0M642.4 255.2v3.5M643.4 258.7v3.1M644.3 261.9v2.3M653.5 238.6v2.5M656.2 236.7v5.7" stroke="#2484ff" stroke-width="1.6" fill="none"/><path d="M624.9 241.0v1.3M626.8 236.1v5.9M645.2 264.2v2.0M647.0 257.1v8.1M648.0 252.8v7.3M649.8 248.7v5.2M650.7 240.5v8.2M652.6 240.6v2.5M654.4 240.1v1.3M655.3 239.0v1.3M657.2 232.8v3.9M658.1 229.5v4.3M659.9 225.1v5.0" stroke="#ff2424" stroke-width="1.6" fill="none"/><path d="M623.0 237.5v3.2M625.9 239.4v1.6M627.8 240.3v2.9M628.7 240.8v2.4M629.6 243.2v1.4M630.5 241.9v3.1M631.4 244.9v1.3M633.3 246.3v4.4M634.2 247.0v1.3M635.1 246.7v1.3M636.9 250.5v1.3M640.6 252.9v1.5M648.9 253.9v3.6M651.6 242.1v2.4M660.9 225.4v3.1" stroke="#e8d470" stroke-width="1.5" fill="none"/><path d="M638.8 250.0v1.3" stroke="#e0e0e0" stroke-width="1.5" fill="none"/><path d="M661.8 223.7v3.8M662.7 224.4v1.3M663.6 222.2v5.4M664.5 217.5v7.9M667.4 218.1v1.3M670.1 213.8v8.0M672.8 218.7v1.6M673.7 220.3v4.0M676.4 223.5v6.2M683.8 218.6v7.7M686.5 223.3v8.7M689.3 231.6v3.3M690.2 234.9v5.4M691.1 240.3v5.7M693.0 245.1v9.1M693.9 251.4v5.7M694.8 256.1v7.7M697.5 256.8v2.1M699.4 256.8v2.8" stroke="#2484ff" stroke-width="1.6" fill="none"/><path d="M666.4 219.0v1.8M668.3 212.5v7.9M671.0 217.7v1.3M675.5 224.7v2.3M677.3 223.9v5.8M681.0 218.9v3.1M682.8 218.6v1.3M685.6 223.7v2.0M695.7 259.7v4.1" stroke="#ff2424" stroke-width="1.6" fill="none"/><path d="M665.5 220.1v1.3M669.2 212.5v3.3M671.9 217.7v3.3M674.6 224.3v1.3M678.2 223.7v1.3M679.1 220.4v3.4M680.1 218.3v5.5M681.9 218.9v1.3M687.4 231.3v1.3M688.4 230.3v4.7M696.6 256.0v5.8M698.5 256.8v2.0" stroke="#e8d470" stroke-width="1.5" fill="none"/><path d="M700.3 254.0v4.7M701.2 256.3v5.4M702.1 260.0v3.6M703.0 263.6v10.1M705.8 274.9v5.2M707.6 279.3v4.5M708.5 283.7v5.9M709.5 283.8v8.2M711.3 292.0v7.0M712.2 299.0v5.6M713.1 302.4v8.9M715.0 308.9v4.8M719.5 292.3v6.9M724.1 302.3v2.5M726.9 302.0v1.3M727.8 299.9v6.8M728.8 306.7v2.2M729.7 308.9v2.2M732.4 308.2v4.1M737.9 296.8v1.5M739.7 299.9v2.6" stroke="#2484ff" stroke-width="1.6" fill="none"/><path d="M704.0 267.6v6.0M704.9 273.6v1.3M710.4 292.0v6.8M715.9 306.1v7.6M716.8 303.8v5.9M717.7 299.2v4.6M718.6 295.5v3.7M723.2 296.7v5.6M726.0 302.0v1.3M733.3 305.6v2.7M734.2 300.2v5.3M736.1 296.8v5.2M738.8 298.4v2.5" stroke="#ff2424" stroke-width="1.6" fill="none"/><path d="M714.1 308.9v1.3M720.5 298.8v2.3M722.3 299.5v2.3M735.2 297.8v6.7M737.0 296.8v1.3" stroke="#e8d470" stroke-width="1.5" fill="none"/><path d="M731.5 308.6v6.3" stroke="#e0e0e0" stroke-width="1.5" fill="none"/><path d="M740.6 300.8v3.3M741.6 300.8v3.9M742.5 302.9v4.9M745.2 302.2v5.1M747.0 304.2v7.0M748.0 308.7v4.8M756.2 298.6v4.5M759.0 300.0v2.9M759.9 302.3v1.3M764.5 304.5v5.4M768.2 303.0v1.3M770.0 298.2v1.8M774.6 300.0v5.4M777.3 304.6v1.3" stroke="#2484ff" stroke-width="1.6" fill="none"/><path d="M744.3 299.4v5.0M748.9 310.7v5.3M750.7 314.0v4.2M751.6 311.8v2.2M752.5 309.2v2.7M753.5 306.2v3.0M754.4 302.9v4.3M755.3 298.6v4.2M757.1 298.6v5.3M758.1 298.9v2.1M763.6 303.9v2.4M765.4 304.4v5.5M769.1 299.9v3.6M770.9 298.2v1.3M772.7 300.1v1.3" stroke="#ff2424" stroke-width="1.6" fill="none"/><path d="M743.4 302.9v1.4M746.1 306.0v2.6M749.8 316.0v1.3M760.8 302.3v1.3M761.7 302.6v1.5M762.7 300.0v4.2M766.3 302.7v4.7M767.2 302.7v1.3M773.6 296.5v4.3M775.5 304.3v4.1M776.4 301.2v5.4" stroke="#e8d470" stroke-width="1.5" fill="none"/><path d="M781.9 290.5v8.4M789.2 293.6v3.5M792.9 296.4v3.0M793.9 295.4v3.5M794.8 295.4v1.3M802.1 293.8v3.6M807.6 290.3v2.5M808.5 290.3v4.0M809.5 294.3v1.4" stroke="#2484ff" stroke-width="1.6" fill="none"/><path d="M778.2 303.0v2.3M779.1 301.3v2.8M781.0 293.7v5.7M785.6 298.1v2.6M786.5 298.1v2.7M787.4 296.6v4.2M788.3 293.6v5.9M790.1 296.1v2.2M795.7 296.1v2.3M796.6 293.7v4.7M798.4 294.0v3.0M801.2 294.9v2.5M805.8 292.3v1.6M810.4 290.5v9.0" stroke="#ff2424" stroke-width="1.6" fill="none"/><path d="M782.8 297.4v3.6M783.7 297.2v2.2M784.6 299.4v1.3M792.0 299.3v1.3M797.5 290.3v5.0M799.4 295.5v3.4M800.3 291.7v4.1M803.0 293.4v1.4M804.9 290.4v3.5M806.7 288.8v4.0" stroke="#e8d470" stroke-width="1.5" fill="none"/><path d="M780.1 299.4v1.9M791.1 294.3v8.2" stroke="#e0e0e0" stroke-width="1.5" fill="none"/></g>
<g clip-path="url(#c2)"><path d="M814.1 296.4v1.4M839.7 273.7v1.4" stroke="#2484ff" stroke-width="1.6" fill="none"/><path d="M819.5 295.4v1.4M823.2 286.6v1.4M830.6 277.0v1.4M831.5 275.9v1.4M834.2 274.4v1.4M835.2 273.5v1.4M837.9 275.8v1.4M845.2 269.6v3.1" stroke="#ff2424" stroke-width="1.6" fill="none"/><path d="M812.2 295.2v1.4M816.8 299.2v1.4M817.7 297.7v1.4M826.9 278.9v1.4M827.8 280.9v1.4M840.6 274.1v1.4M841.5 273.9v1.4" stroke="#e8d470" stroke-width="1.5" fill="none"/><path d="M836.1 275.1v1.4" stroke="#e0e0e0" stroke-width="1.5" fill="none"/></g>
<g clip-path="url(#c2)"><path d="M853.5 273.6v1.4M857.2 275.5v1.4M861.7 277.7v1.4M900.3 289.9v1.4M902.1 289.7v1.4M904.8 292.7v1.4M908.5 295.1v1.4" stroke="#2484ff" stroke-width="1.6" fill="none"/><path d="M881.9 287.6v1.4" stroke="#ff2424" stroke-width="1.6" fill="none"/><path d="M862.6 277.9v1.4M865.4 281.4v1.4M866.3 280.3v1.4M870.9 283.7v1.4M876.4 286.5v1.4M878.3 286.2v1.4M884.7 289.1v1.4M887.4 289.8v1.4M890.2 290.3v1.4M895.7 288.4v1.4M901.2 289.4v1.4M910.3 297.4v1.4M911.2 298.9v1.4M914.0 300.2v1.4M916.8 302.3v1.4M918.6 303.9v1.4" stroke="#e8d470" stroke-width="1.5" fill="none"/><path d="M860.8 277.5v1.4M893.9 288.1v1.4" stroke="#e0e0e0" stroke-width="1.5" fill="none"/></g>
<g clip-path="url(#c2)"><path d="M962.2 292.9v1.3M963.0 291.9v1.3" stroke="#2484ff" stroke-width="1.6" fill="none"/><path d="M965.0 290.7v1.3" stroke="#ff2424" stroke-width="1.6" fill="none"/><path d="M960.5 294.2v1.3M964.0 291.3v1.3M966.0 290.5v1.3" stroke="#e8d470" stroke-width="1.5" fill="none"/></g>
<g clip-path="url(#c3)"><path d="M6.3 451.5 7.4 451.2 8.4 450.1 9.5 448.9 10.6 451.8 11.6 454.9 12.7 453.3 13.7 453.0 14.8 451.8 15.8 451.7 16.9 450.8 17.9 451.1 19.0 450.2 20.0 447.2 21.1 446.3 22.4 447.4 23.6 448.1 24.9 448.4 26.1 446.2 27.4 446.5 28.4 445.7 29.5 444.3 30.6 445.6 31.6 444.5 33.3 434.6 34.8 438.7 35.8 440.0 36.9 441.2 38.0 440.1 39.0 440.3 40.3 441.6 41.6 442.7 43.0 443.1 44.3 442.6 45.3 441.9 46.4 443.3 47.5 441.8 48.5 441.3 49.8 439.8 51.1 438.7 52.5 436.2 53.8 434.3 55.1 434.1 56.5 430.4 57.8 428.5 59.1 427.8 60.5 429.7 61.9 430.1 63.3 431.1 64.3 435.5 65.4 434.2 66.5 438.3 67.5 436.6 68.5 436.8 69.6 432.9 70.7 433.9 71.7 431.3 72.9 431.1 74.1 430.3 75.3 432.3 76.6 432.0 77.8 430.9 79.0 431.1 80.2 430.3 81.4 431.5 82.6 430.6 83.8 431.3 85.0 429.1 86.2 431.3 87.4 431.8 88.6 431.0 89.9 432.5 91.1 430.6 92.4 432.6 93.6 431.9 94.9 432.1 96.0 433.2 97.1 434.8 98.1 432.7 99.2 435.2 100.2 435.7 101.3 437.3 102.3 437.3 103.5 436.4 104.8 436.4 106.0 436.5 107.2 434.5 108.5 434.8 109.7 434.0 111.0 433.2 112.2 433.2 113.5 434.6 114.7 432.0 116.0 432.5 117.3 431.7 118.7 431.5 120.0 429.3 121.3 427.7 122.6 430.8 123.9 429.6 125.3 433.0 126.6 435.0 127.9 434.6 129.1 434.2 130.4 433.9 131.6 433.7 132.9 434.9 134.2 432.8 135.4 433.4 136.7 434.2 137.9 434.7 139.2 435.6 140.5 435.5 141.8 436.4 143.0 436.5 144.3 438.6 145.6 439.0 146.9 435.3 148.1 436.3 149.4 434.2 150.6 432.4 151.9 431.7 153.2 431.8 154.6 432.1 155.9 432.8 157.2 431.4 158.5 434.9 159.8 436.3 161.1 436.8 162.4 438.9 163.7 440.1 165.1 439.5 166.4 439.2 167.7 440.2 168.9 439.5 170.2 439.8 171.4 440.4 172.6 440.8 173.9 438.6 175.1 438.7 176.4 437.0 177.6 438.1 178.9 437.5 180.1 436.0 181.4 436.8 182.7 434.6 184.0 434.2 185.2 433.3 186.5 432.0 187.8 431.2 189.1 432.1 190.4 432.0 191.6 433.6 192.9 434.9 194.2 435.9 195.2 434.6 196.3 435.3 197.3 435.5 198.4 435.0 199.7 437.0 201.0 438.7 202.2 436.9 203.5 437.6 204.8 437.9 206.1 437.8 207.3 436.7 208.6 438.7 209.8 435.7 211.1 436.8 212.1 434.4 213.2 431.0 214.4 432.4 215.7 429.7 216.9 428.8 218.1 432.2 219.4 432.2 220.6 431.8 221.9 431.4 223.1 429.6 224.4 428.6 225.6 427.9 226.9 427.8 228.2 428.1 229.4 429.1 230.7 426.9 231.9 425.4 233.2 427.5 234.5 426.3 235.8 425.8 237.2 427.3 238.5 425.0 239.9 426.9 241.3 431.1 242.7 430.4 244.0 430.9 245.3 431.2 246.5 428.5 247.8 429.3 249.1 429.8 250.3 429.7 251.5 430.3 252.7 431.5 253.9 431.2 255.1 430.2 256.3 429.2 257.5 430.6 258.7 429.3 260.0 428.3 261.2 428.6 262.4 429.9 263.7 429.8 264.9 429.4 266.2 430.4 267.4 428.9 268.7 427.9 269.9 428.2 271.2 427.7 272.4 427.9 273.7 427.0 274.9 427.5 276.1 425.9 277.4 425.8 278.6 426.1 279.8 424.5 281.1 425.0 282.3 424.7 283.5 425.1 284.8 421.6 286.0 424.6 287.1 424.9 288.1 427.1 289.2 430.0 290.5 429.4 291.7 428.0 293.0 429.2 294.2 430.3 295.5 429.6 296.8 430.6 298.0 431.5 299.3 432.9 300.5 430.9 301.8 430.5 303.1 431.9 304.3 432.8 305.6 434.7 306.8 434.7 308.1 436.2 309.2 436.0 310.2 435.5 311.3 437.8 312.4 437.7 313.7 438.8 315.0 437.4 316.3 439.8 317.6 438.4 318.9 439.8 320.2 441.8 321.4 441.7 322.7 441.9 324.0 444.9 325.3 442.5 326.6 442.8 327.9 441.1 329.2 438.8 330.3 438.5 331.4 437.4 332.4 435.2 333.5 435.1 334.5 435.1 335.6 438.9 336.6 443.0 338.0 443.1 339.4 442.5 340.8 440.6 342.1 445.4 343.5 449.3 344.8 454.1 346.1 458.1 347.5 455.9 348.9 455.3 350.3 454.7 351.6 454.5 353.0 455.4 354.3 456.0 355.6 456.3 356.9 456.3 358.1 455.3 359.4 454.4 360.6 455.5 361.9 454.9 363.2 452.4 364.5 452.5 365.9 450.1 367.2 450.2 368.5 449.2 369.9 449.3 371.2 450.2 372.5 449.1 373.9 452.3 375.3 454.8 376.7 454.9 378.0 454.3 379.2 455.1 380.5 454.3 381.7 453.0 383.0 456.0 384.1 452.6 385.3 453.6 386.7 451.7 388.1 450.5 389.5 449.2 390.9 450.7 392.3 453.6 393.7 454.6 395.0 456.0 396.4 455.4 397.7 456.8 399.0 454.7 400.3 456.0 401.6 456.0 403.0 454.9 404.3 454.3 405.6 456.1 406.9 458.8 408.2 458.4 409.5 457.2 410.8 461.4 412.1 461.7 413.5 462.0 414.8 463.2 416.2 463.6 417.6 462.1 419.0 460.6 420.4 463.5 421.8 463.6 423.2 464.3 424.5 462.6 425.9 461.5 427.2 458.1 428.5 456.9 429.8 457.4 431.1 454.7 432.5 457.5 433.8 457.9 434.9 459.2 435.9 462.5 437.2 462.3 438.5 459.9 439.9 462.7 441.2 461.2 442.5 462.1 443.9 461.0 445.2 461.0 446.5 460.8 447.8 461.1 449.1 460.5 450.4 464.1 451.7 462.6 453.0 464.4 454.3 464.2 455.5 463.3 456.8 463.6 458.1 463.6 459.4 464.8 460.7 465.5 462.0 465.7 463.3 466.7 464.4 468.4 465.4 467.4 466.5 467.4 467.8 467.0 469.0 468.5 470.3 469.7 471.5 470.7 472.8 468.3 474.2 469.7 475.6 469.5 477.0 471.0 478.3 470.8 479.6 471.7 480.8 471.6 482.1 471.3 483.4 471.0 484.7 471.2 486.0 469.7 487.3 470.5 488.6 470.1 489.9 470.3 491.2 471.7 492.6 470.3 493.9 472.0 495.2 472.1 496.5 471.5 497.7 472.7 499.0 472.6 500.3 473.5 501.6 473.0 502.8 473.3 504.1 472.2 505.3 472.3 506.6 472.9 507.8 473.3 509.0 472.5 510.2 470.9 511.4 473.4 512.6 473.3 513.8 472.0 515.0 471.3 516.2 471.5 517.4 471.3 518.6 474.2 519.9 472.1 521.1 472.2 522.3 472.9 523.5 473.4 524.7 472.2 525.9 472.0 527.1 473.0 528.3 473.2 529.5 472.3 530.7 471.6 531.9 471.1 533.2 473.2 534.4 472.0 535.7 472.8 536.9 471.8 538.2 473.1 539.5 475.3 540.9 474.9 542.2 476.7 543.5 476.5 544.8 475.3 546.1 475.7 547.5 474.1 548.8 472.8 550.1 474.5 551.3 472.4 552.6 472.4 553.8 473.6 555.1 473.6 556.5 471.1 557.9 471.6 559.3 470.7 560.6 469.7 561.9 470.3 563.1 467.8 564.4 469.6 565.7 469.8 567.0 470.6 568.3 467.1 569.6 468.9 570.9 467.0 572.0 465.5 573.1 466.2 574.2 464.7 575.3 464.1 576.3 468.1 577.4 473.4 578.5 471.6 579.5 470.8 580.5 469.3 581.6 468.1 583.0 470.3 584.4 471.6 585.8 475.7 587.0 474.3 588.3 474.2 589.5 473.7 590.7 473.2 592.0 472.0 593.2 471.5 594.5 471.8 595.7 473.0 597.0 474.5 598.2 473.7 599.5 475.4 600.8 477.2 602.1 474.9 603.5 476.8 604.8 477.5 605.8 478.6 606.9 479.9 608.0 482.7 609.0 483.5 610.1 482.8 611.1 480.5 612.2 481.5 613.4 482.2 614.7 480.2 615.9 480.8 617.1 480.0 618.4 481.5 619.6 480.8 620.6 482.7 621.7 484.6 622.7 485.9 623.8 486.2 624.9 485.5 625.9 482.8 627.0 483.7 628.3 482.6 629.5 486.2 630.8 485.6 632.0 486.6 633.3 486.1 634.3 487.8 635.4 486.0 636.5 485.3 637.5 484.5 638.8 484.9 640.1 486.4 641.5 487.5 642.8 487.8 644.0 491.2 645.2 490.2 646.4 493.3 647.6 495.4 648.8 495.8 650.0 497.3 651.2 498.0 652.3 496.4 653.3 497.8 654.4 494.0 655.7 496.7 657.0 496.4 658.4 498.9 659.7 500.0 660.9 502.3 662.1 503.1 663.3 504.9 664.5 506.4 665.7 508.5 666.9 510.2 668.1 512.8 669.4 511.3 670.8 510.8 672.1 512.5 673.4 508.9 674.5 509.8 675.5 511.6 676.5 508.0 677.6 510.2 679.0 510.5 680.4 512.7 681.8 513.7 683.0 510.6 684.3 511.5 685.5 509.1 686.7 506.9 688.0 507.4 689.2 504.8 690.4 507.8 691.6 510.5 692.8 511.2 694.0 515.5 695.2 517.7 696.4 519.4 697.6 522.3 698.9 517.5 700.2 514.9 701.4 509.2 702.7 505.7 704.0 502.2 705.3 498.2 706.5 492.6 707.8 489.9 709.0 487.4 710.3 482.1 711.3 481.0 712.4 482.4 713.5 480.9 714.5 482.7 715.6 482.7 716.6 482.9 717.7 485.6 719.1 484.7 720.5 484.1 721.9 483.9 723.2 484.2 724.5 485.5 725.9 484.5 727.2 485.3 728.5 487.6 729.8 489.3 731.1 491.2 732.4 490.7 733.5 493.5 734.5 495.1 735.6 496.5 736.7 497.1 738.0 496.9 739.2 494.5 740.5 494.5 741.7 495.8 743.0 493.4 744.3 494.6 745.5 496.5 746.8 493.3 748.0 494.1 749.3 495.3 750.3 496.8 751.4 497.9 752.5 499.3 753.5 499.3 754.6 500.7 755.6 502.4 756.7 501.1 757.8 502.4 759.1 501.7 760.3 501.7 761.6 499.4 762.8 500.4 764.1 498.6 765.3 500.0 766.5 501.1 767.6 502.2 768.8 503.2 770.0 506.4 771.3 505.9 772.5 506.9 773.8 507.0 775.0 505.8 776.3 506.9 777.3 504.9 778.4 502.5 779.5 503.7 780.5 501.6 781.6 501.9 782.6 503.1 783.7 501.3 784.8 503.6 785.8 501.1 786.9 500.8 788.0 499.5 789.0 497.6 790.3 497.7 791.5 500.5 792.8 499.9 794.0 501.2 795.3 501.1 796.6 501.3 797.8 500.5 799.1 500.2 800.3 500.6 801.6 500.9 802.7 500.1 803.8 502.1 804.8 504.5 805.9 505.4 807.2 505.6 808.4 506.4 809.7 505.7 810.9 504.8 812.2 506.5 813.2 508.0 814.3 510.3 815.3 509.0 816.4 506.2 817.5 507.9 818.5 505.1 819.7 506.9 820.9 505.0 822.1 506.3 823.4 506.6 824.6 506.0 825.8 507.1 827.0 507.3 828.2 506.6 829.4 508.0 830.6 507.8 831.8 508.6 833.0 507.6 834.2 508.1 835.4 508.5 836.6 508.2 837.8 508.0 839.0 508.5 840.2 508.0 841.4 506.8 842.6 507.0 843.8 507.2 845.1 506.6 846.4 507.4 847.6 507.7 848.9 507.7 850.2 508.0 851.5 509.0 852.8 511.1 854.1 510.9 855.4 512.3 856.7 510.2 858.0 508.1 859.4 507.6 860.7 507.6 862.0 507.1 863.2 506.8 864.5 507.7 865.7 507.6 867.0 507.4 868.3 506.4 869.6 506.4 870.8 504.9 872.1 503.1 873.4 503.9 874.7 502.8 875.9 502.5 877.2 503.1 878.4 502.6 879.7 505.8 880.9 504.8 882.1 506.2 883.3 505.9 884.5 505.6 885.7 504.8 886.9 507.0 888.1 506.6 889.3 506.7 890.5 505.6 891.7 508.0 893.0 506.1 894.2 507.1 895.4 506.8 896.6 508.3 897.8 508.5 898.9 507.7 900.1 507.3 901.3 508.7 902.4 508.8 903.6 506.8 904.8 508.5 905.9 508.1 907.1 510.1 908.4 509.7 909.7 506.9 910.9 506.7 912.2 505.6 913.5 506.2 914.7 505.8 915.9 503.0 917.1 502.2 918.4 503.5 919.6 502.4 920.8 500.8 922.1 503.2 923.5 505.2 924.8 506.8 926.1 507.3 927.3 506.4 928.5 507.9 929.7 507.7 931.0 506.9 932.2 508.9 933.4 508.9 934.6 509.8 936.0 507.2 937.4 506.1 938.8 505.6 939.8 504.5 940.9 502.4 942.0 500.5 943.0 502.0 944.3 500.3 945.6 499.3 947.0 499.0 948.3 496.8 949.6 498.6 950.9 500.3 952.2 503.3 953.5 503.5 954.6 505.3 955.6 506.1 956.7 508.2 958.1 507.0 959.5 505.1 960.9 503.3 962.0 512.7 963.0 510.6 964.1 511.2 965.2 512.8 966.2 511.7" stroke="#ff0a0a" stroke-width="1.9" fill="none" stroke-linejoin="round"/></g>
<text transform="scale(0.7 1)" x="1005.57 1011.28" y="183.20" font-size="10.8" font-weight="normal" fill="#c0c0c0" style="font-family:'Liberation Sans',sans-serif" xml:space="preserve">11</text>
<text transform="scale(0.7 1)" x="1005.57 1011.28" y="397.30" font-size="10.8" font-weight="normal" fill="#c0c0c0" style="font-family:'Liberation Sans',sans-serif" xml:space="preserve">11</text>
<text transform="scale(0.7 1)" x="1005.57 1011.28" y="523.90" font-size="10.8" font-weight="normal" fill="#c0c0c0" style="font-family:'Liberation Sans',sans-serif" xml:space="preserve">11</text>
<rect x="971" y="155" width="46" height="15.699999999999989" fill="#d8d8d8"/>
<text x="981" y="165.85" textLength="25.2" lengthAdjust="spacingAndGlyphs" font-size="11.5" font-weight="bold" fill="#101010">7,689</text>
<rect x="971" y="282" width="46" height="17" fill="#d8d8d8"/>
<text x="981" y="293.50" textLength="25.2" lengthAdjust="spacingAndGlyphs" font-size="11.5" font-weight="bold" fill="#101010">3,891</text>
<rect x="971" y="505.7" width="46" height="16.099999999999966" fill="#d8d8d8"/>
<text x="981" y="516.75" textLength="25.2" lengthAdjust="spacingAndGlyphs" font-size="11.5" font-weight="bold" fill="#101010">3,798</text>
<path transform="translate(6.40 40.70) scale(0.840)" d="M0.6 1.8H3.6V8.2H0.6ZM0.6 5H3.6M4.6 2.6H9.4M7 0.4V4.4M4.2 4.6H9.8M4.6 6.6H9.6M8 5V9.6L6.8 9.3M5.6 7.6L6.2 8.6" stroke="#c8c8c8" stroke-width="1.01" fill="none"/><path transform="translate(16.00 40.70) scale(0.840)" d="M3.4 0.3V1.6M0.4 2H6.6M3 2L1 5H5.2M5.2 3.4L0.4 9.6M3 6.2L6.2 9.6M7.4 2V7.2M9.2 0.4V9.6L8.2 9.3" stroke="#c8c8c8" stroke-width="1.01" fill="none"/><text transform="scale(0.7 1)" x="37.90 43.23 50.08 58.47 63.80 70.66 79.04" y="48.30" font-size="11.0" font-weight="normal" fill="#c8c8c8" style="font-family:'Liberation Sans',sans-serif" xml:space="preserve">:06:00 </text><path transform="translate(59.20 40.70) scale(0.840)" d="M2.6 0.4L1 5H4.6M3.6 3Q3 7.2 0.4 9.6M1.4 5.6L4.6 9.2M7 0.4L5.2 4H9.2L8.6 2.8M5.6 5.6H9.2V9.6H5.6Z" stroke="#c8c8c8" stroke-width="1.01" fill="none"/><path transform="translate(68.80 40.70) scale(0.840)" d="M2.4 0.4L0.4 5M1.8 3V9.6M3.6 1.6H9.6M6.6 0.2V2M4.6 3H8.6V8H4.6ZM4.6 4.7H8.6M4.6 6.4H8.6M3.6 2.6V9.5H9.8" stroke="#c8c8c8" stroke-width="1.01" fill="none"/><text transform="scale(0.7 1)" x="113.33" y="48.30" font-size="11.0" font-weight="normal" fill="#c8c8c8" style="font-family:'Liberation Sans',sans-serif" xml:space="preserve">:</text><path d="M83.50 44.9H86.90" stroke="#c8c8c8" stroke-width="0.9"/><path d="M88.30 44.9H91.70" stroke="#c8c8c8" stroke-width="0.9"/><path d="M93.10 44.9H96.50" stroke="#c8c8c8" stroke-width="0.9"/><text transform="scale(0.7 1)" x="140.76" y="48.30" font-size="11.0" font-weight="normal" fill="#c8c8c8" style="font-family:'Liberation Sans',sans-serif" xml:space="preserve"> </text><path transform="translate(102.40 40.70) scale(0.840)" d="M5 0.2V1.4M0.4 1.6H9.6M2.6 2.6H7.4V4.6H2.6ZM1 5.6V9.8M1 5.6H9V9.6L8 9.3M3.4 6.8H6.6V8.8H3.4Z" stroke="#c8c8c8" stroke-width="1.01" fill="none"/><path transform="translate(112.00 40.70) scale(0.840)" d="M2.4 0.4L0.4 5M1.8 3V9.6M3.6 1.6H9.6M6.6 0.2V2M4.6 3H8.6V8H4.6ZM4.6 4.7H8.6M4.6 6.4H8.6M3.6 2.6V9.5H9.8" stroke="#c8c8c8" stroke-width="1.01" fill="none"/><text transform="scale(0.7 1)" x="175.04" y="48.30" font-size="11.0" font-weight="normal" fill="#c8c8c8" style="font-family:'Liberation Sans',sans-serif" xml:space="preserve">:</text><path d="M126.70 44.9H130.10" stroke="#c8c8c8" stroke-width="0.9"/><path d="M131.50 44.9H134.90" stroke="#c8c8c8" stroke-width="0.9"/><path d="M136.30 44.9H139.70" stroke="#c8c8c8" stroke-width="0.9"/><text transform="scale(0.7 1)" x="202.47" y="48.30" font-size="11.0" font-weight="normal" fill="#c8c8c8" style="font-family:'Liberation Sans',sans-serif" xml:space="preserve"> </text><path transform="translate(145.60 40.70) scale(0.840)" d="M5 0.2V1.4M1 3V1.6H9V3M4.2 2.6L2 7H9.2M6.6 4.4Q6 8.2 1.4 9.8M3.6 7.6L8.4 9.8M0.6 5H9.4" stroke="#c8c8c8" stroke-width="1.01" fill="none"/><path transform="translate(155.20 40.70) scale(0.840)" d="M2.4 0.4L0.4 5M1.8 3V9.6M3.6 1.6H9.6M6.6 0.2V2M4.6 3H8.6V8H4.6ZM4.6 4.7H8.6M4.6 6.4H8.6M3.6 2.6V9.5H9.8" stroke="#c8c8c8" stroke-width="1.01" fill="none"/><text transform="scale(0.7 1)" x="236.76" y="48.30" font-size="11.0" font-weight="normal" fill="#c8c8c8" style="font-family:'Liberation Sans',sans-serif" xml:space="preserve">:</text><path d="M169.90 44.9H173.30" stroke="#c8c8c8" stroke-width="0.9"/><path d="M174.70 44.9H178.10" stroke="#c8c8c8" stroke-width="0.9"/><path d="M179.50 44.9H182.90" stroke="#c8c8c8" stroke-width="0.9"/><text transform="scale(0.7 1)" x="264.19" y="48.30" font-size="11.0" font-weight="normal" fill="#c8c8c8" style="font-family:'Liberation Sans',sans-serif" xml:space="preserve"> </text><path transform="translate(188.80 40.70) scale(0.840)" d="M2.6 0.4L1 2.6L3 3.6L0.8 6H4.2M3.6 4.4L2.8 5.6M2.4 6V9.8M1.2 7.6L0.6 9M3.6 7.6L4.2 9M7 0.4L5 3.6M6.4 1.6H9.2L5.4 6M6.6 3.2L9.6 6M6.6 6.8L8 7.6M6 8.6L8.6 9.8" stroke="#c8c8c8" stroke-width="1.01" fill="none"/><path transform="translate(198.40 40.70) scale(0.840)" d="M2.4 0.4L0.4 5M1.8 3V9.6M3.6 1.6H9.6M6.6 0.2V2M4.6 3H8.6V8H4.6ZM4.6 4.7H8.6M4.6 6.4H8.6M3.6 2.6V9.5H9.8" stroke="#c8c8c8" stroke-width="1.01" fill="none"/><text transform="scale(0.7 1)" x="298.47" y="48.30" font-size="11.0" font-weight="normal" fill="#c8c8c8" style="font-family:'Liberation Sans',sans-serif" xml:space="preserve">:</text><path d="M213.10 44.9H216.50" stroke="#c8c8c8" stroke-width="0.9"/><path d="M217.90 44.9H221.30" stroke="#c8c8c8" stroke-width="0.9"/><path d="M222.70 44.9H226.10" stroke="#c8c8c8" stroke-width="0.9"/>
<path transform="translate(6.40 206.40) scale(0.840)" d="M0.6 1.8H3.6V8.2H0.6ZM0.6 5H3.6M4.6 2.6H9.4M7 0.4V4.4M4.2 4.6H9.8M4.6 6.6H9.6M8 5V9.6L6.8 9.3M5.6 7.6L6.2 8.6" stroke="#c8c8c8" stroke-width="1.01" fill="none"/><path transform="translate(16.00 206.40) scale(0.840)" d="M3.4 0.3V1.6M0.4 2H6.6M3 2L1 5H5.2M5.2 3.4L0.4 9.6M3 6.2L6.2 9.6M7.4 2V7.2M9.2 0.4V9.6L8.2 9.3" stroke="#c8c8c8" stroke-width="1.01" fill="none"/><text transform="scale(0.7 1)" x="37.90 43.23 50.08 58.47 63.80 70.66 79.04" y="214.00" font-size="11.0" font-weight="normal" fill="#c8c8c8" style="font-family:'Liberation Sans',sans-serif" xml:space="preserve">:06:00 </text><path transform="translate(59.20 206.40) scale(0.840)" d="M2.6 0.4L1 5H4.6M3.6 3Q3 7.2 0.4 9.6M1.4 5.6L4.6 9.2M7 0.4L5.2 4H9.2L8.6 2.8M5.6 5.6H9.2V9.6H5.6Z" stroke="#c8c8c8" stroke-width="1.01" fill="none"/><path transform="translate(68.80 206.40) scale(0.840)" d="M2.4 0.4L0.4 5M1.8 3V9.6M3.6 1.6H9.6M6.6 0.2V2M4.6 3H8.6V8H4.6ZM4.6 4.7H8.6M4.6 6.4H8.6M3.6 2.6V9.5H9.8" stroke="#c8c8c8" stroke-width="1.01" fill="none"/><text transform="scale(0.7 1)" x="113.33 118.66 127.04 132.37 139.23 146.08 154.47" y="214.00" font-size="11.0" font-weight="normal" fill="#c8c8c8" style="font-family:'Liberation Sans',sans-serif" xml:space="preserve">:3,891 </text><path transform="translate(112.00 206.40) scale(0.840)" d="M5 0.2V1.4M0.4 1.6H9.6M2.6 2.6H7.4V4.6H2.6ZM1 5.6V9.8M1 5.6H9V9.6L8 9.3M3.4 6.8H6.6V8.8H3.4Z" stroke="#c8c8c8" stroke-width="1.01" fill="none"/><path transform="translate(121.60 206.40) scale(0.840)" d="M2.4 0.4L0.4 5M1.8 3V9.6M3.6 1.6H9.6M6.6 0.2V2M4.6 3H8.6V8H4.6ZM4.6 4.7H8.6M4.6 6.4H8.6M3.6 2.6V9.5H9.8" stroke="#c8c8c8" stroke-width="1.01" fill="none"/><text transform="scale(0.7 1)" x="188.76 194.08 202.47 207.80 214.66 221.51 229.90" y="214.00" font-size="11.0" font-weight="normal" fill="#c8c8c8" style="font-family:'Liberation Sans',sans-serif" xml:space="preserve">:3,891 </text><path transform="translate(164.80 206.40) scale(0.840)" d="M5 0.2V1.4M1 3V1.6H9V3M4.2 2.6L2 7H9.2M6.6 4.4Q6 8.2 1.4 9.8M3.6 7.6L8.4 9.8M0.6 5H9.4" stroke="#c8c8c8" stroke-width="1.01" fill="none"/><path transform="translate(174.40 206.40) scale(0.840)" d="M2.4 0.4L0.4 5M1.8 3V9.6M3.6 1.6H9.6M6.6 0.2V2M4.6 3H8.6V8H4.6ZM4.6 4.7H8.6M4.6 6.4H8.6M3.6 2.6V9.5H9.8" stroke="#c8c8c8" stroke-width="1.01" fill="none"/><text transform="scale(0.7 1)" x="264.19 269.51 277.90 283.23 290.08 296.94 305.33" y="214.00" font-size="11.0" font-weight="normal" fill="#c8c8c8" style="font-family:'Liberation Sans',sans-serif" xml:space="preserve">:3,891 </text><path transform="translate(217.60 206.40) scale(0.840)" d="M2.6 0.4L1 2.6L3 3.6L0.8 6H4.2M3.6 4.4L2.8 5.6M2.4 6V9.8M1.2 7.6L0.6 9M3.6 7.6L4.2 9M7 0.4L5 3.6M6.4 1.6H9.2L5.4 6M6.6 3.2L9.6 6M6.6 6.8L8 7.6M6 8.6L8.6 9.8" stroke="#c8c8c8" stroke-width="1.01" fill="none"/><path transform="translate(227.20 206.40) scale(0.840)" d="M2.4 0.4L0.4 5M1.8 3V9.6M3.6 1.6H9.6M6.6 0.2V2M4.6 3H8.6V8H4.6ZM4.6 4.7H8.6M4.6 6.4H8.6M3.6 2.6V9.5H9.8" stroke="#c8c8c8" stroke-width="1.01" fill="none"/><text transform="scale(0.7 1)" x="339.61 344.94 353.33 358.66 365.51 372.37" y="214.00" font-size="11.0" font-weight="normal" fill="#c8c8c8" style="font-family:'Liberation Sans',sans-serif" xml:space="preserve">:3,891</text>
<text transform="scale(0.7 1)" x="12.04" y="428.00" font-size="11.0" font-weight="normal" fill="#c8c8c8" style="font-family:'Liberation Sans',sans-serif" xml:space="preserve">[</text><path transform="translate(12.30 420.40) scale(0.840)" d="M5 0.4L0.4 4.6M5 0.4L9.6 4.6M2.6 4.4H7.4M1.4 6.4H8.6M5 4.4V9.4M2.8 7.2L3.6 8.8M7.2 7.2L6.4 8.8M0.4 9.5H9.6" stroke="#c8c8c8" stroke-width="1.01" fill="none"/><text transform="scale(0.7 1)" x="32.61 37.94 44.80 53.19 58.51 65.37 73.76 79.08 87.47 92.80 99.66 106.51" y="428.00" font-size="11.0" font-weight="normal" fill="#c8c8c8" style="font-family:'Liberation Sans',sans-serif" xml:space="preserve"> 23/04 7,689</text><path d="M80.60 421.5L87.10 428.0M87.10 421.5L80.60 428.0" stroke="#c8c8c8" stroke-width="0.8"/><text transform="scale(0.7 1)" x="127.08 135.47 140.80 147.66 156.04" y="428.00" font-size="11.0" font-weight="normal" fill="#c8c8c8" style="font-family:'Liberation Sans',sans-serif" xml:space="preserve">1.00]</text><path d="M113.70 424.8H121.30" stroke="#c8c8c8" stroke-width="0.9"/><text transform="scale(0.7 1)" x="176.61" y="428.00" font-size="11.0" font-weight="normal" fill="#c8c8c8" style="font-family:'Liberation Sans',sans-serif" xml:space="preserve">[</text><path transform="translate(127.50 420.40) scale(0.840)" d="M5.4 0.2L4.4 1.6M1.8 1.8H8.2V9.6H1.8ZM1.8 5.6H8.2" stroke="#c8c8c8" stroke-width="1.01" fill="none"/><path transform="translate(137.10 420.40) scale(0.840)" d="M5 0.4L0.4 4.6M5 0.4L9.6 4.6M2.6 4.4H7.4M1.4 6.4H8.6M5 4.4V9.4M2.8 7.2L3.6 8.8M7.2 7.2L6.4 8.8M0.4 9.5H9.6" stroke="#c8c8c8" stroke-width="1.01" fill="none"/><text transform="scale(0.7 1)" x="210.90 216.23 223.08 231.47 236.80 243.66 252.04 257.37 265.76 271.08 277.94 284.80" y="428.00" font-size="11.0" font-weight="normal" fill="#c8c8c8" style="font-family:'Liberation Sans',sans-serif" xml:space="preserve"> 23/04 3,891</text><path d="M205.40 421.5L211.90 428.0M211.90 421.5L205.40 428.0" stroke="#c8c8c8" stroke-width="0.8"/><text transform="scale(0.7 1)" x="305.37 313.76 319.08 325.94 334.33 341.19" y="428.00" font-size="11.0" font-weight="normal" fill="#c8c8c8" style="font-family:'Liberation Sans',sans-serif" xml:space="preserve">1.00] </text><path transform="translate(242.70 420.40) scale(0.840)" d="M2.6 0.4L1 2.6L3 3.6L0.8 6H4.2M3.6 4.4L2.8 5.6M2.4 6V9.8M1.2 7.6L0.6 9M3.6 7.6L4.2 9M7 0.4L5 3.6M6.4 1.6H9.2L5.4 6M6.6 3.2L9.6 6M6.6 6.8L8 7.6M6 8.6L8.6 9.8" stroke="#c8c8c8" stroke-width="1.01" fill="none"/><path transform="translate(252.30 420.40) scale(0.840)" d="M2.4 0.4L0.4 5M1.8 3V9.6M3.6 1.6H9.6M6.6 0.2V2M4.6 3H8.6V8H4.6ZM4.6 4.7H8.6M4.6 6.4H8.6M3.6 2.6V9.5H9.8" stroke="#c8c8c8" stroke-width="1.01" fill="none"/><text transform="scale(0.7 1)" x="375.47" y="428.00" font-size="11.0" font-weight="normal" fill="#c8c8c8" style="font-family:'Liberation Sans',sans-serif" xml:space="preserve"> </text><path transform="translate(266.70 420.40) scale(0.840)" d="M0.6 1.8H3.6V8.2H0.6ZM0.6 5H3.6M4.6 2.6H9.4M7 0.4V4.4M4.2 4.6H9.8M4.6 6.6H9.6M8 5V9.6L6.8 9.3M5.6 7.6L6.2 8.6" stroke="#c8c8c8" stroke-width="1.01" fill="none"/><path transform="translate(276.30 420.40) scale(0.840)" d="M3.4 0.3V1.6M0.4 2H6.6M3 2L1 5H5.2M5.2 3.4L0.4 9.6M3 6.2L6.2 9.6M7.4 2V7.2M9.2 0.4V9.6L8.2 9.3" stroke="#c8c8c8" stroke-width="1.01" fill="none"/><text transform="scale(0.7 1)" x="409.76 415.08 421.94 430.33 435.66 442.51 450.90 456.23 464.61 469.94 476.80 483.66" y="428.00" font-size="11.0" font-weight="normal" fill="#c8c8c8" style="font-family:'Liberation Sans',sans-serif" xml:space="preserve">:06:00 3,798</text>
<rect x="4.6" y="199.8" width="1012.4" height="2.6" fill="#f4f4f4"/>
<rect x="4.6" y="202.4" width="1012.4" height="1.2" fill="#c8c8c8"/>
<rect x="4.6" y="414" width="1012.4" height="3" fill="#f4f4f4"/>
<rect x="4.6" y="417" width="1012.4" height="1" fill="#c8c8c8"/>
</svg></body></html>
